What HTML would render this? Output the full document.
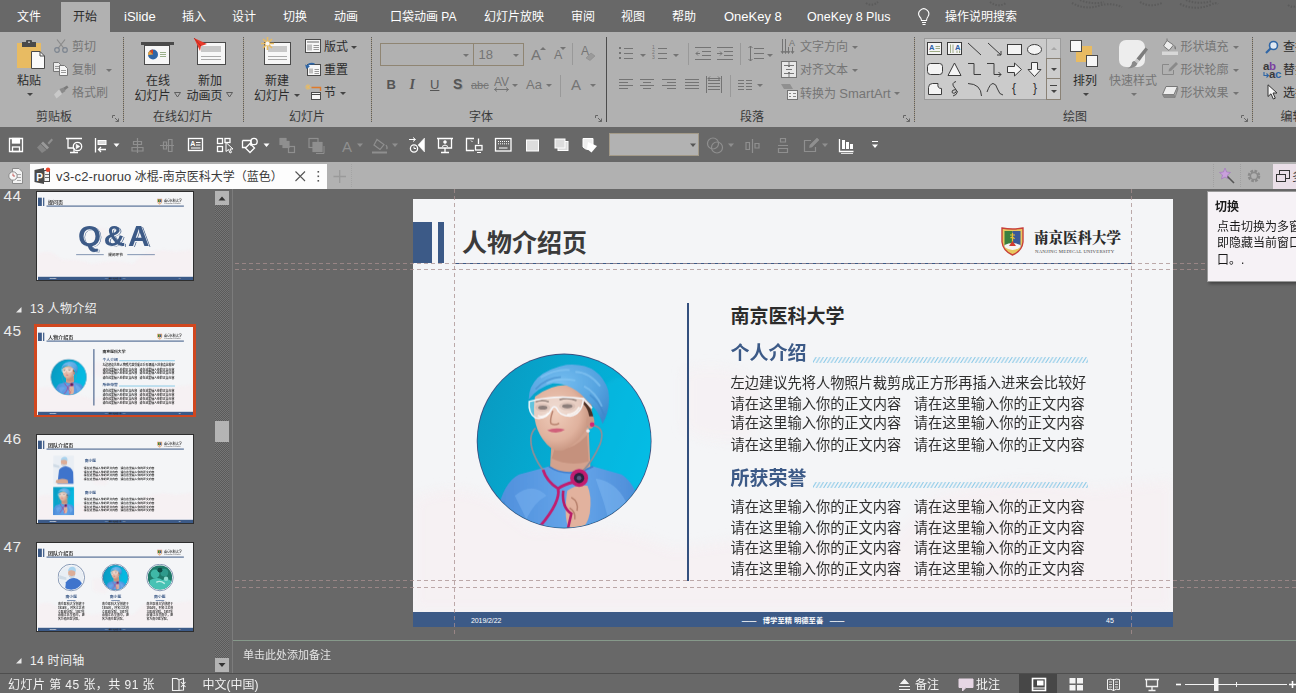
<!DOCTYPE html>
<html lang="zh-CN">
<head>
<meta charset="utf-8">
<title>PowerPoint</title>
<style>
*{box-sizing:border-box;margin:0;padding:0}
html,body{width:1296px;height:693px;overflow:hidden;background:#686868}
body{position:relative;font-family:"Liberation Sans","Noto Sans CJK SC",sans-serif;font-size:12px;color:#2b2b2b}
.a{position:absolute;white-space:nowrap;line-height:1}
.tab{position:absolute;top:10px;font-size:12px;color:#fff;white-space:nowrap;line-height:14px}
#tabbar{position:absolute;left:0;top:0;width:1296px;height:32px;background:#686868}
#acttab{position:absolute;left:61px;top:2px;width:49px;height:31px;background:#b1b1b1}
#ribbon{position:absolute;left:0;top:32px;width:1296px;height:95px;background:#b1b1b1}
#qat{position:absolute;left:0;top:127px;width:1296px;height:35px;background:#686868}
#docbar{position:absolute;left:0;top:162px;width:1296px;height:27px;background:#b1b1b1}
#doctab{position:absolute;left:30px;top:164px;width:297px;height:25px;background:#fdfdfd}
.rl{position:absolute;font-size:12px;line-height:13px;color:#2b2b2b;white-space:nowrap}
.rd{color:#757575}
.gl{position:absolute;top:109px;font-size:12px;line-height:13px;color:#3a3a3a;white-space:nowrap}
.sep{position:absolute;top:37px;width:1px;height:85px;background:#8c8c8c}
.dd{position:absolute;width:0;height:0;border-left:3px solid transparent;border-right:3px solid transparent;border-top:3px solid #444}
.ddg{border-top-color:#747474}
svg{position:absolute;overflow:visible}
.th span{font-weight:bold;color:#1c1c1c}
</style>
</head>
<body>
<!-- ===== TAB BAR ===== -->
<div id="tabbar"></div>
<div id="acttab"></div>
<svg style="left:0;top:0" width="1296" height="14" viewBox="0 0 1296 14"><g fill="none" stroke="#575757" stroke-width="2" stroke-dasharray="1.500 1.500" opacity=".8"><path d="M1072 3Q1085 10 1098 6Q1110 2 1122 7M1080 0Q1092 5 1104 2M1140 2Q1150 8 1162 3M1180 4Q1195 11 1210 5Q1216 2 1218 4M1186 0Q1198 5 1212 1M866 3Q872 7 878 2M990 2Q998 8 1006 3M1288 5Q1292 8 1296 6"/></g></svg>
<span class="tab" style="left:17px">文件</span>
<span class="tab" style="left:73px;color:#2b2b2b">开始</span>
<span class="tab" style="left:124px;font-size:13px">iSlide</span>
<span class="tab" style="left:182px">插入</span>
<span class="tab" style="left:232px">设计</span>
<span class="tab" style="left:283px">切换</span>
<span class="tab" style="left:334px">动画</span>
<span class="tab" style="left:390px">口袋动画 PA</span>
<span class="tab" style="left:484px">幻灯片放映</span>
<span class="tab" style="left:571px">审阅</span>
<span class="tab" style="left:621px">视图</span>
<span class="tab" style="left:672px">帮助</span>
<span class="tab" style="left:724px;font-size:13px">OneKey 8</span>
<span class="tab" style="left:807px;font-size:12.500px">OneKey 8 Plus</span>
<span class="tab" style="left:945px">操作说明搜索</span>
<!-- ===== RIBBON ===== -->
<div id="ribbon"></div>
<span class="rl" style="left:17px;top:74.5px;">粘贴</span>
<i class="dd" style="left:27px;top:93px"></i>
<span class="rl rd" style="left:72px;top:41px;">剪切</span>
<span class="rl rd" style="left:72px;top:64px;">复制</span>
<i class="dd ddg" style="left:105.5px;top:69px"></i>
<span class="rl rd" style="left:72px;top:87px;">格式刷</span>
<span class="gl" style="left:36px;top:111px;">剪贴板</span>
<svg style="left:112px;top:115px" width="7" height="7" viewBox="0 0 7 7"><path d="M0.5 3V0.5H3M3 3L6.5 6.5M6.5 3.5V6.5H3.5" fill="none" stroke="#666" stroke-width="1"/></svg>
<i class="a" style="left:123px;top:37px;width:1px;height:85px;background:repeating-linear-gradient(#5e5e5e 0 1px,#a79c88 1px 2px)"></i>
<span class="rl" style="left:146px;top:74.5px;">在线</span>
<span class="rl" style="left:134.5px;top:89.5px;">幻灯片</span>
<span class="rl" style="left:198px;top:74.5px;">新加</span>
<span class="rl" style="left:186.5px;top:89.5px;">动画页</span>
<span class="gl" style="left:153px;top:111px;">在线幻灯片</span>
<i class="a" style="left:243px;top:37px;width:1px;height:85px;background:repeating-linear-gradient(#5e5e5e 0 1px,#a79c88 1px 2px)"></i>
<span class="rl" style="left:265px;top:74.5px;">新建</span>
<span class="rl" style="left:254px;top:89.5px;">幻灯片</span>
<i class="dd" style="left:293.5px;top:94px"></i>
<span class="rl" style="left:324px;top:41px;">版式</span>
<i class="dd" style="left:351px;top:46px"></i>
<span class="rl" style="left:324px;top:64px;">重置</span>
<span class="rl" style="left:324px;top:87px;">节</span>
<i class="dd" style="left:339.5px;top:92px"></i>
<span class="gl" style="left:289px;top:111px;">幻灯片</span>
<i class="a" style="left:371px;top:37px;width:1px;height:85px;background:repeating-linear-gradient(#5e5e5e 0 1px,#a79c88 1px 2px)"></i>
<i class="a" style="left:380px;top:43px;width:94px;height:23px;border:1px solid #8f8573"></i>
<i class="a" style="left:473px;top:43px;width:51px;height:23px;border:1px solid #8f8573"></i>
<i class="dd ddg" style="left:463px;top:54px"></i>
<i class="dd ddg" style="left:513px;top:54px"></i>
<span class="rl rd" style="left:478.5px;top:47.5px;font-size:13px">18</span>
<span class="rl" style="left:386.5px;top:78px;font-weight:bold;font-size:13px;color:#555">B</span>
<span class="rl" style="left:409.5px;top:78px;font-style:italic;font-weight:bold;font-size:14px;color:#555;font-family:'Liberation Serif',serif">I</span>
<span class="rl" style="left:430px;top:78px;text-decoration:underline;font-size:13px;color:#555">U</span>
<span class="rl" style="left:453px;top:78px;font-weight:bold;font-size:14px;color:#555;text-shadow:1px 1px 0 #999">S</span>
<span class="rl rd" style="left:471px;top:78.5px;text-decoration:line-through;font-size:11px">abc</span>
<span class="rl rd" style="left:494px;top:75.5px;font-size:12px">AV</span>
<i class="dd ddg" style="left:512px;top:84px"></i>
<svg style="left:494px;top:87px" width="15" height="5" viewBox="0 0 15 5"><path d="M0.5 2.5H14.5M3 0.5L0.5 2.5L3 4.5M12 0.5L14.5 2.5L12 4.5" fill="none" stroke="#747474" stroke-width="1"/></svg>
<span class="rl rd" style="left:526px;top:78px;font-size:13px">Aa</span>
<i class="dd ddg" style="left:545.5px;top:84px"></i>
<i class="a" style="left:560px;top:75px;width:1px;height:22px;background:#999"></i>
<span class="rl rd" style="left:571px;top:77.5px;font-size:15px">A</span>
<i class="dd ddg" style="left:589.5px;top:84px"></i>
<span class="rl rd" style="left:531px;top:48px;font-size:15px">A</span>
<i class="dd ddg" style="left:540px;top:47px;transform:rotate(180deg)"></i>
<span class="rl rd" style="left:554px;top:49px;font-size:12.5px">A</span>
<i class="dd ddg" style="left:560px;top:47px"></i>
<i class="a" style="left:572px;top:43px;width:1px;height:22px;background:#999"></i>
<span class="rl rd" style="left:581px;top:44.5px;font-size:12px">A</span>
<svg style="left:585px;top:52px" width="11" height="9" viewBox="0 0 11 9"><path d="M1 6L6 1L10 4L5 8.5Z" fill="#9a9a9a" stroke="#8a8a8a" stroke-width=".6"/></svg>
<span class="gl" style="left:469px;top:111px;">字体</span>
<svg style="left:595px;top:115px" width="7" height="7" viewBox="0 0 7 7"><path d="M0.5 3V0.5H3M3 3L6.5 6.5M6.5 3.5V6.5H3.5" fill="none" stroke="#666" stroke-width="1"/></svg>
<i class="a" style="left:606px;top:37px;width:1px;height:85px;background:#4c4c4c"></i>
<svg style="left:0;top:0" width="1" height="1"><path d="M624 48.5H633M624 53.5H633M624 58.5H633" fill="none" stroke="#747474" stroke-width="1"/></svg>
<svg style="left:0;top:0" width="1" height="1"><g fill="#747474"><rect x="619" y="47" width="2" height="2"/><rect x="619" y="52" width="2" height="2"/><rect x="619" y="57" width="2" height="2"/></g></svg>
<i class="dd ddg" style="left:639.5px;top:54px"></i>
<svg style="left:0;top:0" width="1" height="1"><path d="M658 48.5H667M658 53.5H667M658 58.5H667" fill="none" stroke="#747474" stroke-width="1"/></svg>
<span class="a" style="left:652px;top:45px;font-size:5px;line-height:5px;color:#747474;white-space:pre">1<br>2<br>3</span>
<i class="dd ddg" style="left:673px;top:54px"></i>
<i class="a" style="left:688px;top:43px;width:1px;height:22px;background:#999"></i>
<svg style="left:0;top:0" width="1" height="1"><path d="M695 47.5H711M702 51.5H711M702 55.5H711M695 59.5H711" fill="none" stroke="#747474" stroke-width="1"/></svg>
<svg style="left:0;top:0" width="1" height="1"><path d="M700 53.5H696M698 51.5L696 53.5L698 55.5" fill="none" stroke="#747474"/></svg>
<svg style="left:0;top:0" width="1" height="1"><path d="M717 47.5H733M724 51.5H733M724 55.5H733M717 59.5H733" fill="none" stroke="#747474" stroke-width="1"/></svg>
<svg style="left:0;top:0" width="1" height="1"><path d="M717 53.5H722M720 51.5L722 53.5L720 55.5" fill="none" stroke="#747474"/></svg>
<i class="a" style="left:740px;top:43px;width:1px;height:22px;background:#999"></i>
<svg style="left:0;top:0" width="1" height="1"><path d="M754 48.5H764M754 53.5H764M754 58.5H764" fill="none" stroke="#747474" stroke-width="1"/></svg>
<svg style="left:0;top:0" width="1" height="1"><path d="M750.5 46V61M748.5 48L750.5 46L752.5 48M748.5 59L750.5 61L752.5 59" fill="none" stroke="#747474"/></svg>
<i class="dd ddg" style="left:767px;top:54px"></i>
<svg style="left:0;top:0" width="1" height="1"><path d="M619 79.5H633M619 82.5H628M619 85.5H633M619 88.5H628" fill="none" stroke="#747474" stroke-width="1"/></svg>
<svg style="left:0;top:0" width="1" height="1"><path d="M640 79.5H654M643 82.5H651M640 85.5H654M643 88.5H651" fill="none" stroke="#747474" stroke-width="1"/></svg>
<svg style="left:0;top:0" width="1" height="1"><path d="M662 79.5H676M667 82.5H676M662 85.5H676M667 88.5H676" fill="none" stroke="#747474" stroke-width="1"/></svg>
<svg style="left:0;top:0" width="1" height="1"><path d="M685 79.5H699M685 82.5H699M685 85.5H699M685 88.5H699" fill="none" stroke="#747474" stroke-width="1"/></svg>
<svg style="left:0;top:0" width="1" height="1"><path d="M708 80.5H720M708 83.5H720M708 86.5H720M708 89.5H720" fill="none" stroke="#747474" stroke-width="1"/></svg>
<svg style="left:0;top:0" width="1" height="1"><path d="M706.5 76V93M721.5 76V93M708 78.5H720M710 76.5L708 78.5L710 80.5M718 76.5L720 78.5L718 80.5" fill="none" stroke="#747474"/></svg>
<i class="a" style="left:729.5px;top:75px;width:1px;height:22px;background:#999"></i>
<svg style="left:0;top:0" width="1" height="1"><path d="M738 80.5H744M738 83.5H744M738 86.5H744M738 89.5H744" fill="none" stroke="#747474" stroke-width="1"/></svg>
<svg style="left:0;top:0" width="1" height="1"><path d="M746 80.5H752M746 83.5H752M746 86.5H752M746 89.5H752" fill="none" stroke="#747474" stroke-width="1"/></svg>
<i class="dd ddg" style="left:757px;top:84px"></i>
<svg style="left:781px;top:38px" width="16" height="17" viewBox="0 0 16 17"><path d="M1.5 1V15M4.5 1V15M7.5 9V15M0 13L1.5 15.5L3 13M3 13L4.5 15.5L6 13M6 13L7.5 15.5L9 13" fill="none" stroke="#747474"/><text x="8" y="8" font-size="9" fill="#747474" font-family="Liberation Sans,sans-serif">A</text><path d="M11.5 9V15M10 13L11.5 15.5L13 13" fill="none" stroke="#747474"/></svg>
<span class="rl rd" style="left:800px;top:41px;">文字方向</span>
<i class="dd ddg" style="left:851.5px;top:46px"></i>
<svg style="left:781px;top:61px" width="16" height="17" viewBox="0 0 16 17"><rect x=".5" y=".5" width="15" height="16" fill="#e8e8e8" stroke="#747474"/><path d="M3 4.5H13M3 12.5H13M5 8.5H11M8 1V6M6.5 4L8 6L9.5 4M8 16V11M6.5 13L8 11L9.5 13" fill="none" stroke="#777"/></svg>
<span class="rl rd" style="left:800px;top:64px;">对齐文本</span>
<i class="dd ddg" style="left:851.5px;top:69px"></i>
<svg style="left:781px;top:84px" width="17" height="16" viewBox="0 0 17 16"><path d="M0 0H9L12 5H3Z" fill="#909090"/><rect x="6.5" y="6.5" width="10" height="9" fill="#eee" stroke="#747474"/><path d="M8 9.5H10M12 9.5H15M8 12.5H10M12 12.5H15" stroke="#888"/></svg>
<span class="rl rd" style="left:800px;top:87px;">转换为 <span style="font-size:13px">SmartArt</span></span>
<i class="dd ddg" style="left:894px;top:92px"></i>
<span class="gl" style="left:740px;top:111px;">段落</span>
<svg style="left:903px;top:115px" width="7" height="7" viewBox="0 0 7 7"><path d="M0.5 3V0.5H3M3 3L6.5 6.5M6.5 3.5V6.5H3.5" fill="none" stroke="#666" stroke-width="1"/></svg>
<i class="a" style="left:914px;top:37px;width:1px;height:85px;background:repeating-linear-gradient(#5e5e5e 0 1px,#a79c88 1px 2px)"></i>
<i class="a" style="left:924px;top:38px;width:137px;height:62px;background:#cbcbcb;border:1px solid #9a9a9a"></i>
<i class="a" style="left:1046px;top:38px;width:15px;height:62px;border:1px solid #9c9c9c"></i>
<i class="a" style="left:1046px;top:58px;width:15px;height:21px;border:1px solid #8a8276;background:#cdcdcd"></i>
<i class="a" style="left:1046px;top:78px;width:15px;height:22px;border:1px solid #8a8276;background:#cdcdcd"></i>
<i class="dd" style="left:1050.5px;top:47px;border-top-color:#a8a8a8;transform:rotate(180deg)"></i>
<i class="dd" style="left:1050.5px;top:68px"></i>
<i class="dd" style="left:1050.5px;top:90px"></i>
<i class="a" style="left:1050px;top:85px;width:7px;height:1px;background:#444"></i>
<svg style="left:0;top:0" width="1" height="1"><rect x="927.5" y="42.5" width="14" height="12" fill="#f4f4f4" stroke="#3c3c3c"/><path d="M935.5 46.5H940M935.5 48.5H940M929.5 51.5H940" stroke="#8a9a6a" stroke-width=".8"/><text x="929" y="50" font-size="7.5" font-weight="bold" fill="#2f5fa8" font-family="Liberation Sans,sans-serif">A</text><rect x="947.5" y="42.5" width="14" height="12" fill="#f4f4f4" stroke="#3c3c3c"/><path d="M950.5 44.5V53M953 44.5V53M957 50.5V53M959.5 50.5V53" stroke="#8a9a6a" stroke-width=".8"/><text x="955" y="50" font-size="7.5" font-weight="bold" fill="#2f5fa8" font-family="Liberation Sans,sans-serif">A</text><path d="M968 43L981 55" stroke="#3c3c3c" fill="none"/><path d="M988 43L1001 55M1001 55V51M1001 55H997" stroke="#3c3c3c" fill="none"/><rect x="1007.5" y="44.5" width="14" height="10" fill="#f4f4f4" stroke="#3c3c3c"/><ellipse cx="1034.5" cy="49.5" rx="7" ry="5" fill="#f4f4f4" stroke="#3c3c3c"/><rect x="927.5" y="63.5" width="15" height="11" rx="3" fill="#f4f4f4" stroke="#3c3c3c"/><path d="M954.5 63L961 75.5H948Z" fill="#f4f4f4" stroke="#3c3c3c"/><path d="M968 63.5H974V74.5H981" fill="none" stroke="#3c3c3c"/><path d="M987 63.5H994V74.5H1001M1001 74.5L998.5 72M1001 74.5L998.5 77" fill="none" stroke="#3c3c3c"/><path d="M1007.500 66.500H1014.500V63L1021.500 69.500L1014.500 76V72.500H1007.500Z" fill="#f4f4f4" stroke="#3c3c3c"/><path d="M1031.500 62.500H1037.500V69.500H1041L1034.500 76.500L1028 69.500H1031.500Z" fill="#f4f4f4" stroke="#3c3c3c"/><path d="M928.500 94.500V87.500Q928.500 83.500 932.500 83.500H938Q937 88.500 941.500 88.500V94.500Z" fill="#f4f4f4" stroke="#3c3c3c"/><path d="M956 81.500Q951 83 954 87Q958 91 955 93Q951 94 952.500 90.500Q956 88 957.500 91.500Q957 95 953 96" fill="none" stroke="#3c3c3c"/><path d="M968 83.500Q981 84 981.500 96" fill="none" stroke="#3c3c3c"/><path d="M987 92Q990 83.500 993 83.500Q996 83.500 997.500 89Q999.500 95 1003 95" fill="none" stroke="#3c3c3c"/></svg>
<span class="rl" style="left:1012px;top:82px;font-size:12px">{</span>
<span class="rl" style="left:1033px;top:82px;font-size:12px">}</span>
<span class="rl" style="left:1073px;top:74.5px;">排列</span>
<i class="dd" style="left:1082.5px;top:93px"></i>
<span class="rl rd" style="left:1109px;top:74.5px;">快速样式</span>
<i class="dd ddg" style="left:1131px;top:93px"></i>
<span class="rl rd" style="left:1180.5px;top:41px;">形状填充</span>
<i class="dd ddg" style="left:1232.5px;top:46px"></i>
<span class="rl rd" style="left:1180.5px;top:64px;">形状轮廓</span>
<i class="dd ddg" style="left:1232.5px;top:69px"></i>
<span class="rl rd" style="left:1180.5px;top:87px;">形状效果</span>
<i class="dd ddg" style="left:1232.5px;top:92px"></i>
<span class="gl" style="left:1063px;top:111px;">绘图</span>
<svg style="left:1240.5px;top:115px" width="7" height="7" viewBox="0 0 7 7"><path d="M0.5 3V0.5H3M3 3L6.5 6.5M6.5 3.5V6.5H3.5" fill="none" stroke="#666" stroke-width="1"/></svg>
<i class="a" style="left:1251.5px;top:37px;width:1px;height:85px;background:repeating-linear-gradient(#5e5e5e 0 1px,#a79c88 1px 2px)"></i>
<span class="rl" style="left:1283px;top:41px;">查找</span>
<span class="rl" style="left:1283px;top:64px;">替换</span>
<span class="rl" style="left:1283px;top:87px;">选择</span>
<span class="gl" style="left:1280.5px;top:111px;">编辑</span>
<!-- paste -->
<svg style="left:17px;top:40px" width="29" height="30" viewBox="0 0 29 30">
<rect x="0" y="3" width="24" height="25" fill="#e8bb62"/>
<rect x="5" y="2" width="14" height="5" fill="#4a4a4a"/><rect x="9" y="0" width="6" height="4" rx="1" fill="#4a4a4a"/><rect x="11" y="1.500" width="2" height="1.500" fill="#b2b2b2"/>
<path d="M14.500 11.500H23L27.500 16V28.500H14.500Z" fill="#fafafa" stroke="#4a4a4a"/><path d="M23 11.500V16H27.500" fill="none" stroke="#4a4a4a"/>
</svg>
<!-- scissors -->
<svg style="left:54px;top:39px" width="14" height="14" viewBox="0 0 14 14"><path d="M3 0.500L10 9.500M11 0.500L4 9.500" stroke="#8a8a8a" fill="none" stroke-width="1.200"/><circle cx="3" cy="11" r="2.300" fill="none" stroke="#7d8590" stroke-width="1.200"/><circle cx="11" cy="11" r="2.300" fill="none" stroke="#7d8590" stroke-width="1.200"/></svg>
<!-- copy -->
<svg style="left:53px;top:62px" width="15" height="14" viewBox="0 0 15 14"><path d="M0.500 0.500H5.500L7.500 2.500V9.500H0.500Z" fill="#ececec" stroke="#777"/><path d="M2 4.500H6M2 6.500H6" stroke="#999"/><path d="M6.500 3.500H11.500L14.500 6.500V13.500H6.500Z" fill="#f6f6f6" stroke="#777"/><path d="M8 8.500H13M8 10.500H13" stroke="#999"/></svg>
<!-- format painter -->
<svg style="left:54px;top:85px" width="15" height="14" viewBox="0 0 15 14"><path d="M9 3L13 0.500L14.500 2.500L10.500 5.500Z" fill="#7a7a7a"/><path d="M5.500 4L9.500 2.500L11.500 6L8 8.500Z" fill="#8a8a8a"/><path d="M5 4.500L8 9L2.500 13.500L0 9.500Z" fill="#c9c9c9"/></svg>
<!-- online slides icon -->
<svg style="left:141px;top:41px" width="34" height="24" viewBox="0 0 34 24"><rect x="0" y="1" width="33" height="3" fill="#4a4a4a"/><rect x="3.500" y="4.500" width="25" height="19" fill="#f7f7f7" stroke="#4a4a4a"/><circle cx="12" cy="13.500" r="5" fill="#2f66a6"/><path d="M12 13.500L8.500 10A5 5 0 0 1 12 8.500Z" fill="#d24726"/><path d="M12 13.500L7 14A5 5 0 0 1 8.500 10Z" fill="#e8a33d"/><path d="M19 11.500H25M19 13.500H25M19 15.500H25" stroke="#9ab08a"/></svg>
<!-- new animation page -->
<svg style="left:194px;top:38px" width="32" height="27" viewBox="0 0 32 27"><rect x="3.500" y="4.500" width="28" height="22" fill="#f7f7f7" stroke="#4a4a4a"/><rect x="7" y="8" width="20" height="6" fill="#c8c8c8"/><path d="M7 18.500H27M7 21.500H27" stroke="#aaa"/><path d="M0 0L13 6L7 8L6 13Z" fill="#e8392b"/><path d="M0 0L7 8" stroke="#b02015" stroke-width=".8"/></svg>
<!-- new slide -->
<svg style="left:261px;top:37px" width="30" height="28" viewBox="0 0 30 28"><rect x="3.500" y="5.500" width="26" height="22" fill="#f7f7f7" stroke="#4a4a4a"/><rect x="7" y="9" width="19" height="6" fill="#c8c8c8"/><path d="M7 19.500H26M7 22.500H26" stroke="#aaa"/><g stroke="#e8bb62" stroke-width="1.600"><path d="M6.500 0V13M0 6.500H13M2 2L11 11M11 2L2 11"/></g><circle cx="6.500" cy="6.500" r="2" fill="#f7f7f7"/></svg>
<!-- layout -->
<svg style="left:305px;top:39px" width="17" height="14" viewBox="0 0 17 14"><rect x=".5" y=".5" width="15" height="13" fill="#f7f7f7" stroke="#4a4a4a"/><rect x="2" y="2" width="12" height="2" fill="#b0b0b0"/><rect x="2" y="5.500" width="5" height="6" fill="#c0c0c0"/><path d="M8.500 6.500H14M8.500 8.500H14M8.500 10.500H14" stroke="#999"/></svg>
<!-- reset -->
<svg style="left:305px;top:62px" width="17" height="14" viewBox="0 0 17 14"><rect x="2.500" y="2.500" width="13" height="11" fill="#f7f7f7" stroke="#4a4a4a"/><rect x="4" y="6.500" width="4" height="5" fill="#c0c0c0"/><path d="M9.500 7.500H14M9.500 9.500H14M9.500 11.500H14" stroke="#999"/><path d="M1.500 5.500Q3.500 0.500 9.500 2" fill="none" stroke="#2f66a6" stroke-width="1.600"/><path d="M0 2.500L1.500 7L5 4.500Z" fill="#2f66a6"/></svg>
<!-- section -->
<svg style="left:305px;top:84px" width="17" height="16" viewBox="0 0 17 16"><g stroke="#e8bb62" stroke-width="1"><path d="M3 0V6M0 3H6M1 1L5 5M5 1L1 5"/></g><path d="M6.500 3.500H15.500V7" fill="none" stroke="#e07a2a" stroke-width="1.400"/><rect x="6.500" y="8.500" width="9" height="7" fill="#f7f7f7" stroke="#4a4a4a"/><path d="M6.500 10.500H15.500" stroke="#4a4a4a"/></svg>
<!-- hollow dropdown arrows for online group -->
<svg style="left:174px;top:92px" width="7" height="6" viewBox="0 0 7 6"><path d="M0.500 0.500H6.500L3.500 5Z" fill="none" stroke="#555" stroke-width=".9"/></svg>
<svg style="left:226px;top:92px" width="7" height="6" viewBox="0 0 7 6"><path d="M0.500 0.500H6.500L3.500 5Z" fill="none" stroke="#555" stroke-width=".9"/></svg>
<!-- arrange -->
<svg style="left:1070px;top:40px" width="29" height="27" viewBox="0 0 29 27"><rect x="6" y="6" width="16" height="16" fill="#e8bb62"/><rect x=".5" y=".5" width="11" height="11" fill="#f7f7f7" stroke="#4a4a4a"/><rect x="16.500" y="15.500" width="11" height="11" fill="#f7f7f7" stroke="#4a4a4a"/></svg>
<!-- quick style -->
<svg style="left:1119px;top:40px" width="30" height="30" viewBox="0 0 30 30"><rect x="0" y="0" width="26" height="27" rx="7" fill="#ededed"/><path d="M29 9.500L20.500 21L17.500 18.500L26.500 7.500Z" fill="#7c7c7c"/><path d="M20.500 21L18.500 23.500L15.500 21L17.500 18.500Z" fill="#c9c9c9"/><path d="M18.500 23.500Q17 28 8.500 28.500Q13 26 13 22.500Q14 20.500 15.500 21Z" fill="#8a8a8a"/></svg>
<!-- shape fill -->
<svg style="left:1162px;top:38px" width="17" height="17" viewBox="0 0 17 17"><path d="M5 2.500L11.500 7L7 12.500L1.500 8Z" fill="#ededed" stroke="#777"/><path d="M5 2.500V0.500" stroke="#777"/><path d="M12.500 7Q15 10.500 13.500 11.500Q12 11 12.500 7Z" fill="#777"/><rect x="0" y="13.500" width="16" height="3.500" fill="#d8d8d8"/></svg>
<!-- shape outline -->
<svg style="left:1162px;top:61px" width="17" height="17" viewBox="0 0 17 17"><path d="M7 3.500H0.500V13.500H11.500V9" fill="none" stroke="#888"/><path d="M14 1L16 3L9 10L6.500 10.500L7 8Z" fill="#8a8a8a"/></svg>
<!-- shape effect -->
<svg style="left:1162px;top:85px" width="17" height="15" viewBox="0 0 17 15"><path d="M4 1.500H15.500L12 9.500H0.500Z" fill="#ededed" stroke="#777"/><path d="M0.500 9.500L2 12.500H13L12 9.500M15.500 1.500L16 4L13 12.500" fill="#8a8a8a" stroke="#777" stroke-width=".6"/></svg>
<!-- find -->
<svg style="left:1265px;top:40px" width="14" height="14" viewBox="0 0 14 14"><circle cx="8.500" cy="5.500" r="4" fill="#dfe8f3" stroke="#2f66a6" stroke-width="1.600"/><path d="M5.500 8.500L1 13" stroke="#2f66a6" stroke-width="2.200"/></svg>
<!-- replace -->
<span class="a" style="left:1263px;top:61px;font-size:11.500px;font-weight:bold;color:#3a3a3a;letter-spacing:-.3px">a<span style="color:#7a3fa0">b</span></span><span class="a" style="left:1269px;top:69px;font-size:11.500px;font-weight:bold;color:#3a3a3a;letter-spacing:-.3px">a<span style="color:#2f66a6">c</span></span>
<svg style="left:1263px;top:72px" width="7" height="6" viewBox="0 0 7 6"><path d="M1 0V3.500H5.500M3.500 1.500L5.500 3.500L3.500 5.500" fill="none" stroke="#2f66a6" stroke-width="1.100"/></svg>
<!-- select -->
<svg style="left:1267px;top:84px" width="11" height="16" viewBox="0 0 11 16"><path d="M1 0.800V12.500L4 9.800L6.300 15L8.300 14.200L6 9H10Z" fill="#f7f7f7" stroke="#333" stroke-width="1"/></svg>
<!-- bulb -->
<svg style="left:917px;top:8px" width="14" height="18" viewBox="0 0 14 18"><path d="M4.500 12.500Q4.500 10.500 2.500 8.500A5 5 0 1 1 11 8.500Q9.500 10.500 9.500 12.500Z" fill="none" stroke="#fff" stroke-width="1.100"/><path d="M5 14.500H9M5.500 16.500H8.500" stroke="#fff" stroke-width="1.100"/></svg>


<!-- ===== QAT ===== -->
<div id="qat"></div>
<svg style="left:0;top:127px" width="1296" height="35" viewBox="0 127 1296 35">
<g fill="none" stroke="#fff" stroke-width="1.300">
<!-- save -->
<path d="M9.500 138.500H22.500V151.500H9.500Z"/><rect x="12.500" y="138.500" width="7" height="4.500" fill="#fff"/><rect x="12.500" y="147" width="7" height="4.500"/>
<!-- slideshow from start -->
<path d="M66 138.500H82M68 139V148H74M74 148V152.500M70 152.500H78"/><circle cx="77.500" cy="146.500" r="4.200"/><path d="M76.200 144.300L79.800 146.500L76.200 148.700Z" fill="#fff" stroke-width=".6"/>
<!-- align left -->
<path d="M95.500 138V152.500"/><rect x="98" y="140.500" width="8" height="4" fill="#ddd" stroke-width="1"/><path d="M106 149.500H98.500M101 147L98.500 149.500L101 152"/>
<!-- textbox -->
<rect x="188.500" y="138.500" width="14" height="12"/><path d="M191 148H200.500M196 142.500H200.500M196 145H200.500" stroke-width="1"/><text x="190.300" y="146" font-size="7" font-weight="bold" fill="#fff" stroke="none" font-family="Liberation Sans,sans-serif">A</text>
<!-- select shapes -->
<rect x="217.500" y="138.500" width="5" height="5"/><rect x="217.500" y="146.500" width="5" height="5"/><rect x="225" y="138.500" width="5" height="4"/><path d="M226 142.500V151.500L228.500 149.500L230 153L231.500 152.300L230 149H233Z" fill="#686868" stroke-width="1"/>
<!-- shapes -->
<path d="M242.500 140.500H251V146"/><path d="M242.500 140.500V147.500H246"/><path d="M250 143.500L254.500 148L250 152.500L245.500 148Z"/><circle cx="254" cy="141.500" r="3.200"/>
<!-- clock arrow -->
<circle cx="414" cy="148.500" r="3.600"/><path d="M414 146.500V148.500H416M409 139.500H415M413 137.500L415.500 139.500L413 141.500" stroke-width="1"/><path d="M424.500 138V152L418 145Z" fill="#fff" stroke-width=".5"/>
<!-- presenter -->
<path d="M437 138.500H453M438.500 139V148H451.500V139M445 148V152.500M441 152.500H449"/><circle cx="445" cy="142" r="1.500" fill="#fff" stroke-width=".5"/><path d="M442 146.500Q445 143.500 448 146.500" stroke-width="1"/>
<!-- screen + small monitor -->
<path d="M474 138.500H466.500V150.500H474M478.500 138.500V144"/><path d="M471 140.500L472.500 142" stroke-width="1"/><rect x="475.500" y="145.500" width="6.500" height="4.500"/><path d="M477 152.500H481" stroke-width="1"/>
<!-- keyboard -->
<rect x="495.500" y="138.500" width="15.500" height="12.500"/><path d="M498 141.500H509M498 143.800H509" stroke-width="1" stroke-dasharray="1 1"/><path d="M499 148H507.500" stroke-width="1"/>
<!-- chart -->
<path d="M839.500 139V151.500H853.500"/><rect x="842" y="140" width="3" height="9" fill="#fff" stroke="none"/><rect x="846" y="142" width="3" height="7" fill="#fff" stroke="none"/><rect x="850" y="144" width="3" height="5" fill="#fff" stroke="none"/><path d="M841 153.500H853" stroke-width=".8"/>
<!-- final overflow -->
<path d="M872 141.500H878" stroke-width="1"/><path d="M872 144.500H878L875 148Z" fill="#fff" stroke="none"/>
</g>
<!-- filled squares -->
<rect x="526.500" y="140" width="12" height="11" fill="#ddd" stroke="#fff" stroke-width="1"/>
<rect x="558" y="141.500" width="10" height="9" fill="#ddd" stroke="#fff"/><rect x="555" y="139" width="10" height="9" fill="#ddd" stroke="#fff"/>
<path d="M583 138.500H593V147Q588 152 583 147Z" fill="#eee" stroke="#fff"/><path d="M588 142L597 146L591.500 152.500L587 149Z" fill="#fff"/>
<!-- gray icons -->
<g fill="none" stroke="#8f8f8f" stroke-width="1.200">
<g stroke="none"><path d="M47.500 143L51.500 138.500L53 140L49 144.500Z" fill="#8f8f8f"/><path d="M43 141.500L49 147.500L47 149.500L41 143.500Z" fill="#999"/><path d="M40.500 144L46.500 150L42 153L37 147.500Z" fill="#858585"/></g>
<path d="M137.500 138V153M133.500 141.500H141.500V144.500H133.500ZM132 147.500H143V151H132Z"/>
<path d="M160 145.500H174M163.500 142H166.500V149H163.500ZM168.500 139.500H172V151.500H168.500Z"/>
<rect x="280" y="138.500" width="6" height="6" fill="#8f8f8f"/><rect x="288.500" y="146.500" width="6" height="6"/><rect x="283" y="141.500" width="6" height="6" fill="#8f8f8f"/>
<rect x="309" y="138.500" width="9" height="9"/><rect x="313" y="142.500" width="9" height="9" fill="#8f8f8f"/><path d="M324 146V153.500H316" stroke-width="1"/>
<path d="M372 152.500H387" stroke-width="2"/><path d="M377 139.500L384 144.500L380 149.500L374 145Z"/><path d="M386 145Q388 148 386.500 149" />
<circle cx="713" cy="143.500" r="5.500"/><circle cx="717" cy="147.500" r="5.500"/>
<path d="M752.500 139V153M746 142.500H749.500V149.500H746ZM755 143.500H759V148H755Z"/>
<path d="M778 145.500H788M780.500 138.500H785.500V142H780.500ZM778.500 148.500H787.500V152.500H778.500Z"/>
<path d="M811 140.500H804.500V151.500H815.500V147"/><path d="M817 138L819 140L812 147L809.500 147.500L810 145Z" fill="#8f8f8f" stroke-width=".6"/>
</g>
<text x="342" y="151.500" font-size="15" fill="#8f8f8f" font-family="Liberation Sans,sans-serif">A</text>
<!-- combo -->
<rect x="609.500" y="133.500" width="89" height="22" fill="#b2b2b2" stroke="#a39a88"/>
<g fill="#fff"><path d="M113.500 143.500H119.500L116.500 147Z"/><path d="M263.500 143.500H269.500L266.500 147Z"/></g>
<g fill="#8f8f8f"><path d="M357 143.500H363L360 147Z"/><path d="M392 143.500H398L395 147Z"/><path d="M728 143.500H734L731 147Z"/><path d="M822 143.500H828L825 147Z"/></g>
<path d="M690 143.500H696L693 147Z" fill="#555"/>
</svg>

<!-- ===== DOC TAB BAR ===== -->
<div id="docbar"></div>
<div id="doctab"></div>
<svg style="left:0;top:162px" width="1296" height="27" viewBox="0 162 1296 27">
<!-- history doc icon -->
<path d="M12.500 168.500H19L22.500 172V183.500H12.500Z" fill="#f2f2f2" stroke="#8a8a8a"/><path d="M17 174.500H21M17 177.500H21M17 180.500H21" stroke="#aaa"/><circle cx="13" cy="176" r="4.200" fill="#f6f6f6" stroke="#8a8a8a"/><path d="M13 173.500V176H15" fill="none" stroke="#c0504d" stroke-width=".9"/>
<!-- ppt icon -->
<path d="M34.500 170L44 168V184L34.500 182Z" fill="#4a4a4a"/><rect x="44" y="170.500" width="5.500" height="11" fill="#f4f4f4" stroke="#4a4a4a"/><path d="M45 174.500H49M45 177.500H49" stroke="#4a4a4a" stroke-width=".8"/>
<text x="36.200" y="180.500" font-size="10" font-weight="bold" fill="#fff" font-family="Liberation Sans,sans-serif">P</text>
<circle cx="48" cy="169.800" r="2.200" fill="#e8452c"/>
<!-- close x -->
<path d="M295.500 171.500L305 181M305 171.500L295.500 181" stroke="#555" stroke-width="1.100" fill="none"/>
<g fill="#555"><rect x="317.500" y="171" width="1.600" height="1.600"/><rect x="317.500" y="175.500" width="1.600" height="1.600"/><rect x="317.500" y="180" width="1.600" height="1.600"/></g>
<!-- plus -->
<path d="M333.500 176.500H346M339.700 170V183" stroke="#9a9a9a" stroke-width="1.300" fill="none"/>
<path d="M351.500 164V188" stroke="#a4a4a4" stroke-dasharray="1 1"/>
<!-- right buttons -->
<path d="M1213.500 164V188M1240.500 164V188" stroke="#a0a0a0" stroke-dasharray="1 1"/>
<path d="M1225 168L1226.500 172L1230.500 172.500L1227.500 175L1228.500 179L1225 177L1221.500 179L1222.500 175L1219.500 172.500L1223.500 172Z" fill="#c9a0dc" stroke="#a070c0" stroke-width=".6"/><path d="M1227.500 176.500L1234 183" stroke="#555" stroke-width="1.600"/>
<circle cx="1254" cy="176" r="5" fill="none" stroke="#8a8a8a" stroke-width="2.600" stroke-dasharray="2.600 1.300"/><circle cx="1254" cy="176" r="3.600" fill="none" stroke="#8a8a8a" stroke-width="1.500"/>
<rect x="1273" y="164" width="23" height="25" fill="#eadfe8"/>
<rect x="1279.500" y="170.500" width="10" height="8" fill="#eadfe8" stroke="#333"/><rect x="1276.500" y="174.500" width="9" height="7" fill="#eadfe8" stroke="#333"/>
<text x="1292" y="181" font-size="12" fill="#333" font-family="Liberation Sans,Noto Sans CJK SC,sans-serif">多</text>
</svg>
<span class="a" style="left:56px;top:169px;font-size:13px;line-height:15px;color:#3a3a3a;letter-spacing:.15px">v3-c2-ruoruo<span style="letter-spacing:0;font-size:12px"> 冰棍-南京医科大学（蓝色）</span></span>

<!-- ===== LEFT PANEL ===== -->
<i class="a" style="left:232px;top:189px;width:1px;height:484px;background:#7c7c7c"></i>
<i class="a" style="left:36px;top:190.5px;width:158px;height:90px;background:#2e2e2e"></i>
<div class="a" style="left:37px;top:191.5px;width:156px;height:88px;overflow:hidden;background:#f4f5f7"><div class="a th" style="left:1px;top:1px;width:760px;height:428px;transform:scale(0.20289);transform-origin:0 0">
<svg style="left:0;top:0" width="760" height="428" viewBox="0 0 760 428"><defs><filter id="wmbt44" x="-10%" y="-10%" width="120%" height="120%"><feGaussianBlur stdDeviation="6"/></filter></defs><g filter="url(#wmbt44)" fill="#f7eef1" opacity=".65"><path d="M0 300Q40 280 80 300L120 330Q200 320 260 350L330 340Q400 330 470 350L520 300Q600 270 680 290L760 280V413H0Z"/><path d="M270 170Q330 160 350 190L340 240Q300 250 270 230Z" opacity=".7"/></g></svg>
<i class="a" style="left:0;top:23px;width:19px;height:41px;background:#3c5a87"></i>
<i class="a" style="left:25px;top:23px;width:6px;height:41px;background:#3c5a87"></i>
<span class="a" style="left:49px;top:29px;font-size:25px;line-height:30px;font-weight:bold;color:#3b3b3b">提问页</span>
<i class="a" style="left:42px;top:62px;width:677px;height:5px;background:#3c5a87"></i>
<svg style="left:588px;top:28px" width="23" height="29" viewBox="0 0 23 29"><path d="M1 1Q11.500 3 22 1V15Q21 24 11.500 28Q2 24 1 15Z" fill="#e8c860" stroke="#c8403a" stroke-width="1.400"/><path d="M3.500 4H11.500V20H3.500Z" fill="#3a8040"/><path d="M11.500 4H19.500V20H11.500Z" fill="#3a5a98"/><path d="M3.500 18Q11.500 14 19.500 18V20Q11.500 26 3.500 20Z" fill="#f4f4f4"/><path d="M11.500 6V19M9 8H14M9.500 11Q12 9 13.500 12" stroke="#e8c030" stroke-width="1.200" fill="none"/><path d="M8 19L11.500 14L15 19Z" fill="#d03a30"/></svg>
<span class="a" style="left:621px;top:27px;font-size:14.500px;line-height:22px;font-weight:900;color:#2a2a2a;font-family:'Noto Serif CJK SC','Liberation Serif',serif;letter-spacing:0">南京医科大学</span>
<span class="a" style="left:622px;top:50px;font-size:4.800px;line-height:6px;color:#444;font-family:'Liberation Serif',serif;letter-spacing:.22px">NANJING MEDICAL UNIVERSITY</span>
<i class="a" style="left:0;top:413px;width:760px;height:15px;background:#3c5a87"></i>
<span class="a" style="left:58px;top:416.500px;font-size:7px;line-height:9px;color:#fff;letter-spacing:-.1px">2019/2/22</span>
<span class="a" style="left:320px;top:416.500px;width:120px;text-align:center;font-size:7.300px;line-height:9px;color:#fff;font-weight:bold">——<span style="margin:0 6.500px">博学至精 明德至善</span>——</span>
<span class="a" style="left:693px;top:416.500px;font-size:7px;line-height:9px;color:#fff">44</span>
<span class="a" style="left:180px;top:130px;width:400px;text-align:center;font-size:146px;line-height:160px;font-weight:bold;color:#3c5a87;letter-spacing:14px;text-shadow:5px 5px 0 #f4f5f7,8px 8px 0 #3c5a87">Q&amp;A</span>
<i class="a" style="left:188px;top:303px;width:136px;height:3px;background:#3c5a87"></i>
<i class="a" style="left:440px;top:303px;width:136px;height:3px;background:#3c5a87"></i>
<span class="a" style="left:332px;top:293px;width:100px;text-align:center;font-size:18px;line-height:22px;color:#444">提问环节</span>
</div></div>
<span class="a" style="left:3.500px;top:187.7px;font-size:15.500px;line-height:16px;color:#ececec;letter-spacing:.5px">44</span>
<i class="a" style="left:34px;top:323.7px;width:162px;height:93.500px;background:#d0471f"></i>
<div class="a" style="left:37px;top:326.7px;width:156px;height:88px;overflow:hidden;background:#f4f5f7"><div class="a th" style="left:1px;top:1px;width:760px;height:428px;transform:scale(0.20289);transform-origin:0 0">
<svg style="left:0;top:0" width="760" height="428" viewBox="0 0 760 428"><defs><filter id="wmbt45" x="-10%" y="-10%" width="120%" height="120%"><feGaussianBlur stdDeviation="6"/></filter></defs><g filter="url(#wmbt45)" fill="#f7eef1" opacity=".65"><path d="M0 300Q40 280 80 300L120 330Q200 320 260 350L330 340Q400 330 470 350L520 300Q600 270 680 290L760 280V413H0Z"/><path d="M270 170Q330 160 350 190L340 240Q300 250 270 230Z" opacity=".7"/></g></svg>
<i class="a" style="left:0;top:23px;width:19px;height:41px;background:#3c5a87"></i>
<i class="a" style="left:25px;top:23px;width:6px;height:41px;background:#3c5a87"></i>
<span class="a" style="left:49px;top:29px;font-size:25px;line-height:30px;font-weight:bold;color:#3b3b3b">人物介绍页</span>
<i class="a" style="left:42px;top:62px;width:677px;height:5px;background:#3c5a87"></i>
<svg style="left:588px;top:28px" width="23" height="29" viewBox="0 0 23 29"><path d="M1 1Q11.500 3 22 1V15Q21 24 11.500 28Q2 24 1 15Z" fill="#e8c860" stroke="#c8403a" stroke-width="1.400"/><path d="M3.500 4H11.500V20H3.500Z" fill="#3a8040"/><path d="M11.500 4H19.500V20H11.500Z" fill="#3a5a98"/><path d="M3.500 18Q11.500 14 19.500 18V20Q11.500 26 3.500 20Z" fill="#f4f4f4"/><path d="M11.500 6V19M9 8H14M9.500 11Q12 9 13.500 12" stroke="#e8c030" stroke-width="1.200" fill="none"/><path d="M8 19L11.500 14L15 19Z" fill="#d03a30"/></svg>
<span class="a" style="left:621px;top:27px;font-size:14.500px;line-height:22px;font-weight:900;color:#2a2a2a;font-family:'Noto Serif CJK SC','Liberation Serif',serif;letter-spacing:0">南京医科大学</span>
<span class="a" style="left:622px;top:50px;font-size:4.800px;line-height:6px;color:#444;font-family:'Liberation Serif',serif;letter-spacing:.22px">NANJING MEDICAL UNIVERSITY</span>
<i class="a" style="left:0;top:413px;width:760px;height:15px;background:#3c5a87"></i>
<span class="a" style="left:58px;top:416.500px;font-size:7px;line-height:9px;color:#fff;letter-spacing:-.1px">2019/2/22</span>
<span class="a" style="left:320px;top:416.500px;width:120px;text-align:center;font-size:7.300px;line-height:9px;color:#fff;font-weight:bold">——<span style="margin:0 6.500px">博学至精 明德至善</span>——</span>
<span class="a" style="left:693px;top:416.500px;font-size:7px;line-height:9px;color:#fff">45</span>
<i class="a" style="left:272.5px;top:104px;width:5px;height:278px;background:#34507e"></i>
<svg style="left:47px;top:141px" width="210" height="200" viewBox="0 0 728 693">
<defs><clipPath id="cpt45"><circle cx="361" cy="350" r="300"/></clipPath>
<linearGradient id="bgt45" x1="0" y1="0" x2="1" y2=".35"><stop offset="0" stop-color="#0b93ba"/><stop offset=".45" stop-color="#06a6cd"/><stop offset="1" stop-color="#00b9e2"/></linearGradient>
<linearGradient id="sct45" x1="0" y1="0" x2="1" y2="0"><stop offset="0" stop-color="#4f8fdc"/><stop offset=".55" stop-color="#66a6ea"/><stop offset="1" stop-color="#4c8cd8"/></linearGradient>
<radialGradient id="fct45" cx=".38" cy=".42" r=".7"><stop offset="0" stop-color="#f0cdbb"/><stop offset=".6" stop-color="#e0b29e"/><stop offset="1" stop-color="#bb8671"/></radialGradient>
<radialGradient id="cpgt45" cx=".4" cy=".3" r=".8"><stop offset="0" stop-color="#74bdf0"/><stop offset=".6" stop-color="#55a3e0"/><stop offset="1" stop-color="#3f88cc"/></radialGradient>
<filter id="blt45" x="-5%" y="-5%" width="110%" height="110%"><feGaussianBlur stdDeviation="2.200"/></filter>
<filter id="bht45" x="-20%" y="-20%" width="140%" height="140%"><feGaussianBlur stdDeviation="9"/></filter></defs>
<circle cx="361" cy="350" r="303" fill="#3a4f80"/>
<g clip-path="url(#cpt45)">
<rect x="0" y="0" width="728" height="693" fill="url(#bgt45)"/>
<ellipse cx="560" cy="330" rx="120" ry="200" fill="#10c4ea" opacity=".35" filter="url(#bht45)"/>
<g filter="url(#blt45)">
<!-- neck -->
<path d="M318 340L312 446Q372 486 452 440L446 300Z" fill="#d3a28e"/>
<path d="M330 372Q380 392 440 330L446 420Q380 440 318 410Z" fill="#b98470" opacity=".55"/>
<!-- scrubs -->
<path d="M125 610Q150 492 205 466L308 438Q372 482 462 438L560 466Q612 498 625 590L625 700L125 700Z" fill="url(#sct45)"/>
<path d="M308 438Q372 482 462 438" fill="none" stroke="#3f7fd0" stroke-width="6"/>
<path d="M190 540Q250 490 300 540Q260 560 230 620Z" fill="#7fb6f2" opacity=".45"/>
<path d="M470 480Q540 490 575 560Q560 620 520 640Q500 560 470 480Z" fill="#86bcf5" opacity=".45"/>
<path d="M150 560Q170 620 160 690" stroke="#3a78c8" stroke-width="8" fill="none" opacity=".5"/>
<!-- face -->
<path d="M260 196Q246 285 286 342Q322 394 360 382Q420 352 446 290Q470 228 442 176Q350 128 260 196Z" fill="url(#fct45)"/>
<!-- ear -->
<ellipse cx="452" cy="283" rx="14" ry="25" fill="#cc9a86"/>
<ellipse cx="444" cy="315" rx="6" ry="6" fill="#e8e8f0"/>
<!-- cap -->
<path d="M238 206Q240 112 368 86Q482 76 514 174Q524 240 494 290Q480 240 442 212Q392 150 322 150Q268 165 238 206Z" fill="url(#cpgt45)"/>
<path d="M280 130Q330 100 380 104M400 110Q450 112 486 160M300 150Q340 128 400 140M430 160Q470 180 492 230" fill="none" stroke="#8ccaf6" stroke-width="7" opacity=".55"/>
<path d="M262 170Q300 130 350 128M450 190Q480 210 500 260" fill="none" stroke="#3d84c6" stroke-width="6" opacity=".5"/>
<!-- hair -->
<path d="M430 212Q456 234 462 264L448 264Q444 238 428 222Z" fill="#4a3028"/>
<!-- eyes brows -->
<ellipse cx="287" cy="234" rx="16" ry="7" fill="#3a2822"/><ellipse cx="372" cy="229" rx="18" ry="7.500" fill="#3a2822"/>
<ellipse cx="287" cy="234" rx="26" ry="14" fill="#8a5a4a" opacity=".25"/><ellipse cx="372" cy="229" rx="28" ry="14" fill="#8a5a4a" opacity=".25"/>
<path d="M262 214Q285 204 308 214M345 207Q374 197 404 210" fill="none" stroke="#6a4a3c" stroke-width="6"/>
<!-- nose, lips -->
<path d="M322 245Q310 280 316 290Q330 297 344 288" fill="none" stroke="#b98470" stroke-width="5"/>
<path d="M302 313Q330 300 364 310Q336 330 302 313Z" fill="#d0607a"/>
<!-- glasses -->
<path d="M240 213Q330 188 428 203Q424 256 382 264Q345 264 335 236Q325 226 318 239Q300 277 262 270Q236 256 240 213Z" fill="#f2f6fb" fill-opacity=".38" stroke="#f6f8fc" stroke-width="5"/>
<path d="M270 262Q290 272 308 252M372 258Q400 258 414 232" fill="none" stroke="#ffffff" stroke-width="7" opacity=".7"/>
<path d="M428 203L458 236" stroke="#e8ecf2" stroke-width="6"/>
<!-- stethoscope -->
<path d="M457 296Q506 300 486 360Q460 420 425 455" fill="none" stroke="#8e8e98" stroke-width="6"/>
<path d="M262 305Q234 330 254 390Q270 430 290 452" fill="none" stroke="#8e8e98" stroke-width="6"/>
<circle cx="458" cy="293" r="8" fill="#d02878"/>
<path d="M288 450Q300 490 340 515Q350 560 278 645" fill="none" stroke="#c21f70" stroke-width="10"/>
<path d="M340 515Q360 500 395 492" fill="none" stroke="#c21f70" stroke-width="10"/>
<!-- hand -->
<path d="M372 522Q400 500 442 505Q458 540 450 600Q442 640 420 655L378 655Q358 610 372 522Z" fill="#e2b29e"/>
<path d="M386 545Q412 560 406 592M380 582Q402 596 398 622" fill="none" stroke="#b8826e" stroke-width="5"/>
<path d="M358 522Q352 580 386 602L374 655" fill="none" stroke="#b81a68" stroke-width="9"/>
<circle cx="413" cy="478" r="31" fill="#c21f70"/><circle cx="413" cy="478" r="18" fill="#2a2540"/><circle cx="413" cy="478" r="8" fill="#5a5a80"/>
</g></g></svg>
<span class="a" style="left:317.500px;top:105.500px;font-size:19px;line-height:24px;font-weight:bold;color:#2b2b2b">南京医科大学</span>
<span class="a" style="left:317.500px;top:142.500px;font-size:19px;line-height:24px;font-weight:bold;color:#3c5a87">个人介绍</span>
<i class="a" style="left:400px;top:158px;width:275px;height:6px;background:#9fd3ea"></i>
<span class="a" style="left:317.500px;top:174.600px;font-size:14.240px;line-height:18px;color:#2e2e2e">左边建议先将人物照片裁剪成正方形再插入进来会比较好</span>
<span class="a" style="left:317.500px;top:196px;font-size:14.240px;line-height:18px;color:#2e2e2e">请在这里输入你的正文内容<span style="display:inline-block;width:12.500px"></span>请在这里输入你的正文内容</span>
<span class="a" style="left:317.500px;top:215px;font-size:14.240px;line-height:18px;color:#2e2e2e">请在这里输入你的正文内容<span style="display:inline-block;width:12.500px"></span>请在这里输入你的正文内容</span>
<span class="a" style="left:317.500px;top:237px;font-size:14.240px;line-height:18px;color:#2e2e2e">请在这里输入你的正文内容<span style="display:inline-block;width:12.500px"></span>请在这里输入你的正文内容</span>
<span class="a" style="left:317.500px;top:267.500px;font-size:19px;line-height:24px;font-weight:bold;color:#3c5a87">所获荣誉</span>
<i class="a" style="left:400px;top:282.5px;width:275px;height:6px;background:#9fd3ea"></i>
<span class="a" style="left:317.500px;top:299px;font-size:14.240px;line-height:18px;color:#2e2e2e">请在这里输入你的正文内容<span style="display:inline-block;width:12.500px"></span>请在这里输入你的正文内容</span>
<span class="a" style="left:317.500px;top:319.5px;font-size:14.240px;line-height:18px;color:#2e2e2e">请在这里输入你的正文内容<span style="display:inline-block;width:12.500px"></span>请在这里输入你的正文内容</span>
<span class="a" style="left:317.500px;top:340px;font-size:14.240px;line-height:18px;color:#2e2e2e">请在这里输入你的正文内容<span style="display:inline-block;width:12.500px"></span>请在这里输入你的正文内容</span>
<span class="a" style="left:317.500px;top:361px;font-size:14.240px;line-height:18px;color:#2e2e2e">请在这里输入你的正文内容<span style="display:inline-block;width:12.500px"></span>请在这里输入你的正文内容</span>
</div></div>
<span class="a" style="left:3.500px;top:322.9px;font-size:15.500px;line-height:16px;color:#ececec;letter-spacing:.5px">45</span>
<i class="a" style="left:36px;top:434px;width:158px;height:90px;background:#2e2e2e"></i>
<div class="a" style="left:37px;top:435px;width:156px;height:88px;overflow:hidden;background:#f4f5f7"><div class="a th" style="left:1px;top:1px;width:760px;height:428px;transform:scale(0.20289);transform-origin:0 0">
<svg style="left:0;top:0" width="760" height="428" viewBox="0 0 760 428"><defs><filter id="wmbt46" x="-10%" y="-10%" width="120%" height="120%"><feGaussianBlur stdDeviation="6"/></filter></defs><g filter="url(#wmbt46)" fill="#f7eef1" opacity=".65"><path d="M0 300Q40 280 80 300L120 330Q200 320 260 350L330 340Q400 330 470 350L520 300Q600 270 680 290L760 280V413H0Z"/><path d="M270 170Q330 160 350 190L340 240Q300 250 270 230Z" opacity=".7"/></g></svg>
<i class="a" style="left:0;top:23px;width:19px;height:41px;background:#3c5a87"></i>
<i class="a" style="left:25px;top:23px;width:6px;height:41px;background:#3c5a87"></i>
<span class="a" style="left:49px;top:29px;font-size:25px;line-height:30px;font-weight:bold;color:#3b3b3b">团队介绍页</span>
<i class="a" style="left:42px;top:62px;width:677px;height:5px;background:#3c5a87"></i>
<svg style="left:588px;top:28px" width="23" height="29" viewBox="0 0 23 29"><path d="M1 1Q11.500 3 22 1V15Q21 24 11.500 28Q2 24 1 15Z" fill="#e8c860" stroke="#c8403a" stroke-width="1.400"/><path d="M3.500 4H11.500V20H3.500Z" fill="#3a8040"/><path d="M11.500 4H19.500V20H11.500Z" fill="#3a5a98"/><path d="M3.500 18Q11.500 14 19.500 18V20Q11.500 26 3.500 20Z" fill="#f4f4f4"/><path d="M11.500 6V19M9 8H14M9.500 11Q12 9 13.500 12" stroke="#e8c030" stroke-width="1.200" fill="none"/><path d="M8 19L11.500 14L15 19Z" fill="#d03a30"/></svg>
<span class="a" style="left:621px;top:27px;font-size:14.500px;line-height:22px;font-weight:900;color:#2a2a2a;font-family:'Noto Serif CJK SC','Liberation Serif',serif;letter-spacing:0">南京医科大学</span>
<span class="a" style="left:622px;top:50px;font-size:4.800px;line-height:6px;color:#444;font-family:'Liberation Serif',serif;letter-spacing:.22px">NANJING MEDICAL UNIVERSITY</span>
<i class="a" style="left:0;top:413px;width:760px;height:15px;background:#3c5a87"></i>
<span class="a" style="left:58px;top:416.500px;font-size:7px;line-height:9px;color:#fff;letter-spacing:-.1px">2019/2/22</span>
<span class="a" style="left:320px;top:416.500px;width:120px;text-align:center;font-size:7.300px;line-height:9px;color:#fff;font-weight:bold">——<span style="margin:0 6.500px">博学至精 明德至善</span>——</span>
<span class="a" style="left:693px;top:416.500px;font-size:7px;line-height:9px;color:#fff">46</span>
<svg style="left:75px;top:96px" width="102" height="140" viewBox="0 0 100 137" preserveAspectRatio="xMidYMid slice"><defs><clipPath id="mct46"><rect width="100" height="137"/></clipPath></defs><g clip-path="url(#mct46)"><rect width="100" height="140" fill="#e9eef4"/>
<path d="M0 40L30 50L30 60L0 55Z" fill="#cfdbe6"/>
<path d="M28 70Q40 52 62 52Q88 56 96 80L98 140H20Z" fill="#3f74cc"/>
<path d="M14 120Q40 105 70 118L72 134Q40 140 12 132Z" fill="#d8a890"/>
<ellipse cx="52" cy="32" rx="15" ry="19" fill="#dcae98"/>
<path d="M36 24Q40 4 58 6Q72 10 68 28Q56 16 36 24Z" fill="#a9d3ee"/>
<path d="M40 38Q50 50 64 40L62 50Q52 56 42 48Z" fill="#c9d6e2"/>
</g></svg>
<svg style="left:75px;top:252px;overflow:hidden" width="102" height="135" viewBox="130 60 470 620" preserveAspectRatio="xMidYMid slice"><defs><clipPath id="cpt46"><circle cx="361" cy="350" r="300"/></clipPath>
<linearGradient id="bgt46" x1="0" y1="0" x2="1" y2=".35"><stop offset="0" stop-color="#0b93ba"/><stop offset=".45" stop-color="#06a6cd"/><stop offset="1" stop-color="#00b9e2"/></linearGradient>
<linearGradient id="sct46" x1="0" y1="0" x2="1" y2="0"><stop offset="0" stop-color="#4f8fdc"/><stop offset=".55" stop-color="#66a6ea"/><stop offset="1" stop-color="#4c8cd8"/></linearGradient>
<radialGradient id="fct46" cx=".38" cy=".42" r=".7"><stop offset="0" stop-color="#f0cdbb"/><stop offset=".6" stop-color="#e0b29e"/><stop offset="1" stop-color="#bb8671"/></radialGradient>
<radialGradient id="cpgt46" cx=".4" cy=".3" r=".8"><stop offset="0" stop-color="#74bdf0"/><stop offset=".6" stop-color="#55a3e0"/><stop offset="1" stop-color="#3f88cc"/></radialGradient>
<filter id="blt46" x="-5%" y="-5%" width="110%" height="110%"><feGaussianBlur stdDeviation="2.200"/></filter>
<filter id="bht46" x="-20%" y="-20%" width="140%" height="140%"><feGaussianBlur stdDeviation="9"/></filter></defs><rect x="0" y="0" width="728" height="693" fill="url(#bgt46)"/>
<ellipse cx="560" cy="330" rx="120" ry="200" fill="#10c4ea" opacity=".35" filter="url(#bht46)"/>
<g filter="url(#blt46)">
<!-- neck -->
<path d="M318 340L312 446Q372 486 452 440L446 300Z" fill="#d3a28e"/>
<path d="M330 372Q380 392 440 330L446 420Q380 440 318 410Z" fill="#b98470" opacity=".55"/>
<!-- scrubs -->
<path d="M125 610Q150 492 205 466L308 438Q372 482 462 438L560 466Q612 498 625 590L625 700L125 700Z" fill="url(#sct46)"/>
<path d="M308 438Q372 482 462 438" fill="none" stroke="#3f7fd0" stroke-width="6"/>
<path d="M190 540Q250 490 300 540Q260 560 230 620Z" fill="#7fb6f2" opacity=".45"/>
<path d="M470 480Q540 490 575 560Q560 620 520 640Q500 560 470 480Z" fill="#86bcf5" opacity=".45"/>
<path d="M150 560Q170 620 160 690" stroke="#3a78c8" stroke-width="8" fill="none" opacity=".5"/>
<!-- face -->
<path d="M260 196Q246 285 286 342Q322 394 360 382Q420 352 446 290Q470 228 442 176Q350 128 260 196Z" fill="url(#fct46)"/>
<!-- ear -->
<ellipse cx="452" cy="283" rx="14" ry="25" fill="#cc9a86"/>
<ellipse cx="444" cy="315" rx="6" ry="6" fill="#e8e8f0"/>
<!-- cap -->
<path d="M238 206Q240 112 368 86Q482 76 514 174Q524 240 494 290Q480 240 442 212Q392 150 322 150Q268 165 238 206Z" fill="url(#cpgt46)"/>
<path d="M280 130Q330 100 380 104M400 110Q450 112 486 160M300 150Q340 128 400 140M430 160Q470 180 492 230" fill="none" stroke="#8ccaf6" stroke-width="7" opacity=".55"/>
<path d="M262 170Q300 130 350 128M450 190Q480 210 500 260" fill="none" stroke="#3d84c6" stroke-width="6" opacity=".5"/>
<!-- hair -->
<path d="M430 212Q456 234 462 264L448 264Q444 238 428 222Z" fill="#4a3028"/>
<!-- eyes brows -->
<ellipse cx="287" cy="234" rx="16" ry="7" fill="#3a2822"/><ellipse cx="372" cy="229" rx="18" ry="7.500" fill="#3a2822"/>
<ellipse cx="287" cy="234" rx="26" ry="14" fill="#8a5a4a" opacity=".25"/><ellipse cx="372" cy="229" rx="28" ry="14" fill="#8a5a4a" opacity=".25"/>
<path d="M262 214Q285 204 308 214M345 207Q374 197 404 210" fill="none" stroke="#6a4a3c" stroke-width="6"/>
<!-- nose, lips -->
<path d="M322 245Q310 280 316 290Q330 297 344 288" fill="none" stroke="#b98470" stroke-width="5"/>
<path d="M302 313Q330 300 364 310Q336 330 302 313Z" fill="#d0607a"/>
<!-- glasses -->
<path d="M240 213Q330 188 428 203Q424 256 382 264Q345 264 335 236Q325 226 318 239Q300 277 262 270Q236 256 240 213Z" fill="#f2f6fb" fill-opacity=".38" stroke="#f6f8fc" stroke-width="5"/>
<path d="M270 262Q290 272 308 252M372 258Q400 258 414 232" fill="none" stroke="#ffffff" stroke-width="7" opacity=".7"/>
<path d="M428 203L458 236" stroke="#e8ecf2" stroke-width="6"/>
<!-- stethoscope -->
<path d="M457 296Q506 300 486 360Q460 420 425 455" fill="none" stroke="#8e8e98" stroke-width="6"/>
<path d="M262 305Q234 330 254 390Q270 430 290 452" fill="none" stroke="#8e8e98" stroke-width="6"/>
<circle cx="458" cy="293" r="8" fill="#d02878"/>
<path d="M288 450Q300 490 340 515Q350 560 278 645" fill="none" stroke="#c21f70" stroke-width="10"/>
<path d="M340 515Q360 500 395 492" fill="none" stroke="#c21f70" stroke-width="10"/>
<!-- hand -->
<path d="M372 522Q400 500 442 505Q458 540 450 600Q442 640 420 655L378 655Q358 610 372 522Z" fill="#e2b29e"/>
<path d="M386 545Q412 560 406 592M380 582Q402 596 398 622" fill="none" stroke="#b8826e" stroke-width="5"/>
<path d="M358 522Q352 580 386 602L374 655" fill="none" stroke="#b81a68" stroke-width="9"/>
<circle cx="413" cy="478" r="31" fill="#c21f70"/><circle cx="413" cy="478" r="18" fill="#2a2540"/><circle cx="413" cy="478" r="8" fill="#5a5a80"/>
</g></svg>
<span class="a" style="left:230px;top:112px;font-size:19px;line-height:24px;font-weight:bold;color:#3c5a87">南小医</span>
<span class="a" style="left:221px;top:147px;font-size:14px;line-height:18.800px;color:#333"><span style="color:#c0504d;font-size:8px;vertical-align:middle">• </span>请在这里输入你的正文内容<span style="display:inline-block;width:12px"></span>请在这里输入你的正文内容</span>
<span class="a" style="left:221px;top:165.8px;font-size:14px;line-height:18.800px;color:#333"><span style="color:#c0504d;font-size:8px;vertical-align:middle">• </span>请在这里输入你的正文内容<span style="display:inline-block;width:12px"></span>请在这里输入你的正文内容</span>
<span class="a" style="left:221px;top:184.6px;font-size:14px;line-height:18.800px;color:#333"><span style="color:#c0504d;font-size:8px;vertical-align:middle">• </span>请在这里输入你的正文内容<span style="display:inline-block;width:12px"></span>请在这里输入你的正文内容</span>
<span class="a" style="left:221px;top:203.4px;font-size:14px;line-height:18.800px;color:#333"><span style="color:#c0504d;font-size:8px;vertical-align:middle">• </span>请在这里输入你的正文内容<span style="display:inline-block;width:12px"></span>请在这里输入你的正文内容</span>
<span class="a" style="left:230px;top:268px;font-size:19px;line-height:24px;font-weight:bold;color:#3c5a87">南小医</span>
<span class="a" style="left:221px;top:301px;font-size:14px;line-height:18.800px;color:#333"><span style="color:#c0504d;font-size:8px;vertical-align:middle">• </span>请在这里输入你的正文内容<span style="display:inline-block;width:12px"></span>请在这里输入你的正文内容</span>
<span class="a" style="left:221px;top:319.8px;font-size:14px;line-height:18.800px;color:#333"><span style="color:#c0504d;font-size:8px;vertical-align:middle">• </span>请在这里输入你的正文内容<span style="display:inline-block;width:12px"></span>请在这里输入你的正文内容</span>
<span class="a" style="left:221px;top:338.6px;font-size:14px;line-height:18.800px;color:#333"><span style="color:#c0504d;font-size:8px;vertical-align:middle">• </span>请在这里输入你的正文内容<span style="display:inline-block;width:12px"></span>请在这里输入你的正文内容</span>
<span class="a" style="left:221px;top:357.4px;font-size:14px;line-height:18.800px;color:#333"><span style="color:#c0504d;font-size:8px;vertical-align:middle">• </span>请在这里输入你的正文内容<span style="display:inline-block;width:12px"></span>请在这里输入你的正文内容</span>
</div></div>
<span class="a" style="left:3.500px;top:431.2px;font-size:15.500px;line-height:16px;color:#ececec;letter-spacing:.5px">46</span>
<i class="a" style="left:36px;top:542px;width:158px;height:90px;background:#2e2e2e"></i>
<div class="a" style="left:37px;top:543px;width:156px;height:88px;overflow:hidden;background:#f4f5f7"><div class="a th" style="left:1px;top:1px;width:760px;height:428px;transform:scale(0.20289);transform-origin:0 0">
<svg style="left:0;top:0" width="760" height="428" viewBox="0 0 760 428"><defs><filter id="wmbt47" x="-10%" y="-10%" width="120%" height="120%"><feGaussianBlur stdDeviation="6"/></filter></defs><g filter="url(#wmbt47)" fill="#f7eef1" opacity=".65"><path d="M0 300Q40 280 80 300L120 330Q200 320 260 350L330 340Q400 330 470 350L520 300Q600 270 680 290L760 280V413H0Z"/><path d="M270 170Q330 160 350 190L340 240Q300 250 270 230Z" opacity=".7"/></g></svg>
<i class="a" style="left:0;top:23px;width:19px;height:41px;background:#3c5a87"></i>
<i class="a" style="left:25px;top:23px;width:6px;height:41px;background:#3c5a87"></i>
<span class="a" style="left:49px;top:29px;font-size:25px;line-height:30px;font-weight:bold;color:#3b3b3b">团队介绍页</span>
<i class="a" style="left:42px;top:62px;width:677px;height:5px;background:#3c5a87"></i>
<svg style="left:588px;top:28px" width="23" height="29" viewBox="0 0 23 29"><path d="M1 1Q11.500 3 22 1V15Q21 24 11.500 28Q2 24 1 15Z" fill="#e8c860" stroke="#c8403a" stroke-width="1.400"/><path d="M3.500 4H11.500V20H3.500Z" fill="#3a8040"/><path d="M11.500 4H19.500V20H11.500Z" fill="#3a5a98"/><path d="M3.500 18Q11.500 14 19.500 18V20Q11.500 26 3.500 20Z" fill="#f4f4f4"/><path d="M11.500 6V19M9 8H14M9.500 11Q12 9 13.500 12" stroke="#e8c030" stroke-width="1.200" fill="none"/><path d="M8 19L11.500 14L15 19Z" fill="#d03a30"/></svg>
<span class="a" style="left:621px;top:27px;font-size:14.500px;line-height:22px;font-weight:900;color:#2a2a2a;font-family:'Noto Serif CJK SC','Liberation Serif',serif;letter-spacing:0">南京医科大学</span>
<span class="a" style="left:622px;top:50px;font-size:4.800px;line-height:6px;color:#444;font-family:'Liberation Serif',serif;letter-spacing:.22px">NANJING MEDICAL UNIVERSITY</span>
<i class="a" style="left:0;top:413px;width:760px;height:15px;background:#3c5a87"></i>
<span class="a" style="left:58px;top:416.500px;font-size:7px;line-height:9px;color:#fff;letter-spacing:-.1px">2019/2/22</span>
<span class="a" style="left:320px;top:416.500px;width:120px;text-align:center;font-size:7.300px;line-height:9px;color:#fff;font-weight:bold">——<span style="margin:0 6.500px">博学至精 明德至善</span>——</span>
<span class="a" style="left:693px;top:416.500px;font-size:7px;line-height:9px;color:#fff">47</span>
<i class="a" style="left:97px;top:98px;width:134px;height:134px;border-radius:50%;border:3px solid #3c5a87;background:#fdfdfd"></i>
<svg style="left:104px;top:105px" width="120" height="120" viewBox="0 0 100 100" preserveAspectRatio="xMidYMid slice"><defs><clipPath id="mct47"><circle cx="50" cy="50" r="50"/></clipPath></defs><g clip-path="url(#mct47)"><rect width="100" height="140" fill="#e9eef4"/>
<path d="M0 40L30 50L30 60L0 55Z" fill="#cfdbe6"/>
<path d="M28 70Q40 52 62 52Q88 56 96 80L98 140H20Z" fill="#3f74cc"/>
<path d="M14 120Q40 105 70 118L72 134Q40 140 12 132Z" fill="#d8a890"/>
<ellipse cx="52" cy="32" rx="15" ry="19" fill="#dcae98"/>
<path d="M36 24Q40 4 58 6Q72 10 68 28Q56 16 36 24Z" fill="#a9d3ee"/>
<path d="M40 38Q50 50 64 40L62 50Q52 56 42 48Z" fill="#c9d6e2"/>
</g></svg>
<span class="a" style="left:104px;top:248px;width:120px;text-align:center;font-size:19px;line-height:24px;font-weight:bold;color:#3c5a87">南小医</span>
<i class="a" style="left:143px;top:276px;width:42px;height:3px;background:#3c5a87"></i>
<span class="a" style="left:98px;top:287px;width:132px;white-space:normal;text-align:justify;font-size:14.300px;line-height:18.400px;color:#333">南京医科大学创建于1934年，时名江苏省立医政学院。1957年由镇江迁至南京，更名为南京医学院。</span>
<i class="a" style="left:315px;top:98px;width:134px;height:134px;border-radius:50%;border:3px solid #3c5a87;background:#fdfdfd"></i>
<svg style="left:309.3px;top:94.5px" width="146.6" height="139.5" viewBox="0 0 728 693">
<defs><clipPath id="cpt47"><circle cx="361" cy="350" r="300"/></clipPath>
<linearGradient id="bgt47" x1="0" y1="0" x2="1" y2=".35"><stop offset="0" stop-color="#0b93ba"/><stop offset=".45" stop-color="#06a6cd"/><stop offset="1" stop-color="#00b9e2"/></linearGradient>
<linearGradient id="sct47" x1="0" y1="0" x2="1" y2="0"><stop offset="0" stop-color="#4f8fdc"/><stop offset=".55" stop-color="#66a6ea"/><stop offset="1" stop-color="#4c8cd8"/></linearGradient>
<radialGradient id="fct47" cx=".38" cy=".42" r=".7"><stop offset="0" stop-color="#f0cdbb"/><stop offset=".6" stop-color="#e0b29e"/><stop offset="1" stop-color="#bb8671"/></radialGradient>
<radialGradient id="cpgt47" cx=".4" cy=".3" r=".8"><stop offset="0" stop-color="#74bdf0"/><stop offset=".6" stop-color="#55a3e0"/><stop offset="1" stop-color="#3f88cc"/></radialGradient>
<filter id="blt47" x="-5%" y="-5%" width="110%" height="110%"><feGaussianBlur stdDeviation="2.200"/></filter>
<filter id="bht47" x="-20%" y="-20%" width="140%" height="140%"><feGaussianBlur stdDeviation="9"/></filter></defs>
<circle cx="361" cy="350" r="303" fill="#3a4f80"/>
<g clip-path="url(#cpt47)">
<rect x="0" y="0" width="728" height="693" fill="url(#bgt47)"/>
<ellipse cx="560" cy="330" rx="120" ry="200" fill="#10c4ea" opacity=".35" filter="url(#bht47)"/>
<g filter="url(#blt47)">
<!-- neck -->
<path d="M318 340L312 446Q372 486 452 440L446 300Z" fill="#d3a28e"/>
<path d="M330 372Q380 392 440 330L446 420Q380 440 318 410Z" fill="#b98470" opacity=".55"/>
<!-- scrubs -->
<path d="M125 610Q150 492 205 466L308 438Q372 482 462 438L560 466Q612 498 625 590L625 700L125 700Z" fill="url(#sct47)"/>
<path d="M308 438Q372 482 462 438" fill="none" stroke="#3f7fd0" stroke-width="6"/>
<path d="M190 540Q250 490 300 540Q260 560 230 620Z" fill="#7fb6f2" opacity=".45"/>
<path d="M470 480Q540 490 575 560Q560 620 520 640Q500 560 470 480Z" fill="#86bcf5" opacity=".45"/>
<path d="M150 560Q170 620 160 690" stroke="#3a78c8" stroke-width="8" fill="none" opacity=".5"/>
<!-- face -->
<path d="M260 196Q246 285 286 342Q322 394 360 382Q420 352 446 290Q470 228 442 176Q350 128 260 196Z" fill="url(#fct47)"/>
<!-- ear -->
<ellipse cx="452" cy="283" rx="14" ry="25" fill="#cc9a86"/>
<ellipse cx="444" cy="315" rx="6" ry="6" fill="#e8e8f0"/>
<!-- cap -->
<path d="M238 206Q240 112 368 86Q482 76 514 174Q524 240 494 290Q480 240 442 212Q392 150 322 150Q268 165 238 206Z" fill="url(#cpgt47)"/>
<path d="M280 130Q330 100 380 104M400 110Q450 112 486 160M300 150Q340 128 400 140M430 160Q470 180 492 230" fill="none" stroke="#8ccaf6" stroke-width="7" opacity=".55"/>
<path d="M262 170Q300 130 350 128M450 190Q480 210 500 260" fill="none" stroke="#3d84c6" stroke-width="6" opacity=".5"/>
<!-- hair -->
<path d="M430 212Q456 234 462 264L448 264Q444 238 428 222Z" fill="#4a3028"/>
<!-- eyes brows -->
<ellipse cx="287" cy="234" rx="16" ry="7" fill="#3a2822"/><ellipse cx="372" cy="229" rx="18" ry="7.500" fill="#3a2822"/>
<ellipse cx="287" cy="234" rx="26" ry="14" fill="#8a5a4a" opacity=".25"/><ellipse cx="372" cy="229" rx="28" ry="14" fill="#8a5a4a" opacity=".25"/>
<path d="M262 214Q285 204 308 214M345 207Q374 197 404 210" fill="none" stroke="#6a4a3c" stroke-width="6"/>
<!-- nose, lips -->
<path d="M322 245Q310 280 316 290Q330 297 344 288" fill="none" stroke="#b98470" stroke-width="5"/>
<path d="M302 313Q330 300 364 310Q336 330 302 313Z" fill="#d0607a"/>
<!-- glasses -->
<path d="M240 213Q330 188 428 203Q424 256 382 264Q345 264 335 236Q325 226 318 239Q300 277 262 270Q236 256 240 213Z" fill="#f2f6fb" fill-opacity=".38" stroke="#f6f8fc" stroke-width="5"/>
<path d="M270 262Q290 272 308 252M372 258Q400 258 414 232" fill="none" stroke="#ffffff" stroke-width="7" opacity=".7"/>
<path d="M428 203L458 236" stroke="#e8ecf2" stroke-width="6"/>
<!-- stethoscope -->
<path d="M457 296Q506 300 486 360Q460 420 425 455" fill="none" stroke="#8e8e98" stroke-width="6"/>
<path d="M262 305Q234 330 254 390Q270 430 290 452" fill="none" stroke="#8e8e98" stroke-width="6"/>
<circle cx="458" cy="293" r="8" fill="#d02878"/>
<path d="M288 450Q300 490 340 515Q350 560 278 645" fill="none" stroke="#c21f70" stroke-width="10"/>
<path d="M340 515Q360 500 395 492" fill="none" stroke="#c21f70" stroke-width="10"/>
<!-- hand -->
<path d="M372 522Q400 500 442 505Q458 540 450 600Q442 640 420 655L378 655Q358 610 372 522Z" fill="#e2b29e"/>
<path d="M386 545Q412 560 406 592M380 582Q402 596 398 622" fill="none" stroke="#b8826e" stroke-width="5"/>
<path d="M358 522Q352 580 386 602L374 655" fill="none" stroke="#b81a68" stroke-width="9"/>
<circle cx="413" cy="478" r="31" fill="#c21f70"/><circle cx="413" cy="478" r="18" fill="#2a2540"/><circle cx="413" cy="478" r="8" fill="#5a5a80"/>
</g></g></svg>
<span class="a" style="left:322px;top:248px;width:120px;text-align:center;font-size:19px;line-height:24px;font-weight:bold;color:#3c5a87">南小医</span>
<i class="a" style="left:361px;top:276px;width:42px;height:3px;background:#3c5a87"></i>
<span class="a" style="left:316px;top:287px;width:132px;white-space:normal;text-align:justify;font-size:14.300px;line-height:18.400px;color:#333">南京医科大学创建于1934年，时名江苏省立医政学院。1957年由镇江迁至南京，更名为南京医学院。</span>
<i class="a" style="left:533.5px;top:98px;width:134px;height:134px;border-radius:50%;border:3px solid #3c5a87;background:#fdfdfd"></i>
<svg style="left:540.5px;top:105px" width="120" height="120" viewBox="0 0 100 100"><defs><clipPath id="sgt47"><circle cx="50" cy="50" r="50"/></clipPath></defs><g clip-path="url(#sgt47)"><rect width="100" height="100" fill="#1f7a6a"/>
<circle cx="30" cy="35" r="18" fill="#3fb8a8"/><circle cx="68" cy="30" r="16" fill="#2e9a8c"/><path d="M10 60Q40 45 60 60Q85 50 100 70V100H0Z" fill="#48c2b4"/><circle cx="50" cy="20" r="10" fill="#0f4a44"/><path d="M35 70Q50 60 70 75" stroke="#bfeee6" stroke-width="6" fill="none"/><circle cx="75" cy="55" r="9" fill="#8fded2"/></g></svg>
<span class="a" style="left:540.5px;top:248px;width:120px;text-align:center;font-size:19px;line-height:24px;font-weight:bold;color:#3c5a87">南小医</span>
<i class="a" style="left:579.5px;top:276px;width:42px;height:3px;background:#3c5a87"></i>
<span class="a" style="left:534.5px;top:287px;width:132px;white-space:normal;text-align:justify;font-size:14.300px;line-height:18.400px;color:#333">南京医科大学创建于1934年，时名江苏省立医政学院。1957年由镇江迁至南京，更名为南京医学院。</span>
</div></div>
<span class="a" style="left:3.500px;top:539.2px;font-size:15.500px;line-height:16px;color:#ececec;letter-spacing:.5px">47</span>
<svg style="left:16px;top:306.5px" width="6" height="6" viewBox="0 0 6 6"><path d="M5.500 0V5.500H0Z" fill="#e8e8e8"/></svg>
<span class="a" style="left:30px;top:302px;font-size:12px;line-height:14px;color:#f0f0f0;letter-spacing:.3px">13 人物介绍</span>
<svg style="left:16px;top:658px" width="6" height="6" viewBox="0 0 6 6"><path d="M5.500 0V5.500H0Z" fill="#e8e8e8"/></svg>
<span class="a" style="left:30px;top:653.5px;font-size:12px;line-height:14px;color:#f0f0f0;letter-spacing:.3px">14 时间轴</span>
<svg style="left:214px;top:189px" width="16" height="484" viewBox="214 189 16 484"><defs><pattern id="sbp" width="2" height="2" patternUnits="userSpaceOnUse"><rect width="2" height="2" fill="#5a5a5a"/><rect width="1" height="1" fill="#757575"/><rect x="1" y="1" width="1" height="1" fill="#757575"/></pattern></defs>
<rect x="215" y="205" width="14" height="453" fill="url(#sbp)"/>
<rect x="215" y="191" width="14" height="14" fill="#b4b4b4"/><path d="M218.500 200.500H225.500L222 196.500Z" fill="#333"/>
<rect x="215" y="658" width="14" height="14" fill="#b4b4b4"/><path d="M218.500 663H225.500L222 667Z" fill="#333"/>
<rect x="215" y="421" width="14" height="21" fill="#b4b4b4"/></svg>

<!-- ===== SLIDE ===== -->
<div class="a slide" style="left:413px;top:199px;width:760px;height:428px;background:#f4f5f7;overflow:hidden">
<svg style="left:0;top:0" width="760" height="428" viewBox="0 0 760 428"><defs><filter id="wmbm" x="-10%" y="-10%" width="120%" height="120%"><feGaussianBlur stdDeviation="6"/></filter></defs><g filter="url(#wmbm)" fill="#f7eef1" opacity=".65"><path d="M0 300Q40 280 80 300L120 330Q200 320 260 350L330 340Q400 330 470 350L520 300Q600 270 680 290L760 280V413H0Z"/><path d="M270 170Q330 160 350 190L340 240Q300 250 270 230Z" opacity=".7"/></g></svg>
<i class="a" style="left:0;top:23px;width:19px;height:41px;background:#3c5a87"></i>
<i class="a" style="left:25px;top:23px;width:6px;height:41px;background:#3c5a87"></i>
<span class="a" style="left:49px;top:29px;font-size:25px;line-height:30px;font-weight:bold;color:#3b3b3b">人物介绍页</span>
<i class="a" style="left:42px;top:64px;width:677px;height:1px;background:#3c5a87"></i>
<svg style="left:588px;top:28px" width="23" height="29" viewBox="0 0 23 29"><path d="M1 1Q11.500 3 22 1V15Q21 24 11.500 28Q2 24 1 15Z" fill="#e8c860" stroke="#c8403a" stroke-width="1.400"/><path d="M3.500 4H11.500V20H3.500Z" fill="#3a8040"/><path d="M11.500 4H19.500V20H11.500Z" fill="#3a5a98"/><path d="M3.500 18Q11.500 14 19.500 18V20Q11.500 26 3.500 20Z" fill="#f4f4f4"/><path d="M11.500 6V19M9 8H14M9.500 11Q12 9 13.500 12" stroke="#e8c030" stroke-width="1.200" fill="none"/><path d="M8 19L11.500 14L15 19Z" fill="#d03a30"/></svg>
<span class="a" style="left:621px;top:27px;font-size:14.500px;line-height:22px;font-weight:900;color:#2a2a2a;font-family:'Noto Serif CJK SC','Liberation Serif',serif;letter-spacing:0">南京医科大学</span>
<span class="a" style="left:622px;top:50px;font-size:4.800px;line-height:6px;color:#444;font-family:'Liberation Serif',serif;letter-spacing:.22px">NANJING MEDICAL UNIVERSITY</span>
<i class="a" style="left:0;top:413px;width:760px;height:15px;background:#3c5a87"></i>
<span class="a" style="left:58px;top:416.500px;font-size:7px;line-height:9px;color:#fff;letter-spacing:-.1px">2019/2/22</span>
<span class="a" style="left:320px;top:416.500px;width:120px;text-align:center;font-size:7.300px;line-height:9px;color:#fff;font-weight:bold">——<span style="margin:0 6.500px">博学至精 明德至善</span>——</span>
<span class="a" style="left:693px;top:416.500px;font-size:7px;line-height:9px;color:#fff">45</span>
<i class="a" style="left:274px;top:104px;width:2px;height:278px;background:#34507e"></i>
<svg style="left:47px;top:141px" width="210" height="200" viewBox="0 0 728 693">
<defs><clipPath id="cpm"><circle cx="361" cy="350" r="300"/></clipPath>
<linearGradient id="bgm" x1="0" y1="0" x2="1" y2=".35"><stop offset="0" stop-color="#0b93ba"/><stop offset=".45" stop-color="#06a6cd"/><stop offset="1" stop-color="#00b9e2"/></linearGradient>
<linearGradient id="scm" x1="0" y1="0" x2="1" y2="0"><stop offset="0" stop-color="#4f8fdc"/><stop offset=".55" stop-color="#66a6ea"/><stop offset="1" stop-color="#4c8cd8"/></linearGradient>
<radialGradient id="fcm" cx=".38" cy=".42" r=".7"><stop offset="0" stop-color="#f0cdbb"/><stop offset=".6" stop-color="#e0b29e"/><stop offset="1" stop-color="#bb8671"/></radialGradient>
<radialGradient id="cpgm" cx=".4" cy=".3" r=".8"><stop offset="0" stop-color="#74bdf0"/><stop offset=".6" stop-color="#55a3e0"/><stop offset="1" stop-color="#3f88cc"/></radialGradient>
<filter id="blm" x="-5%" y="-5%" width="110%" height="110%"><feGaussianBlur stdDeviation="2.200"/></filter>
<filter id="bhm" x="-20%" y="-20%" width="140%" height="140%"><feGaussianBlur stdDeviation="9"/></filter></defs>
<circle cx="361" cy="350" r="303" fill="#3a4f80"/>
<g clip-path="url(#cpm)">
<rect x="0" y="0" width="728" height="693" fill="url(#bgm)"/>
<ellipse cx="560" cy="330" rx="120" ry="200" fill="#10c4ea" opacity=".35" filter="url(#bhm)"/>
<g filter="url(#blm)">
<!-- neck -->
<path d="M318 340L312 446Q372 486 452 440L446 300Z" fill="#d3a28e"/>
<path d="M330 372Q380 392 440 330L446 420Q380 440 318 410Z" fill="#b98470" opacity=".55"/>
<!-- scrubs -->
<path d="M125 610Q150 492 205 466L308 438Q372 482 462 438L560 466Q612 498 625 590L625 700L125 700Z" fill="url(#scm)"/>
<path d="M308 438Q372 482 462 438" fill="none" stroke="#3f7fd0" stroke-width="6"/>
<path d="M190 540Q250 490 300 540Q260 560 230 620Z" fill="#7fb6f2" opacity=".45"/>
<path d="M470 480Q540 490 575 560Q560 620 520 640Q500 560 470 480Z" fill="#86bcf5" opacity=".45"/>
<path d="M150 560Q170 620 160 690" stroke="#3a78c8" stroke-width="8" fill="none" opacity=".5"/>
<!-- face -->
<path d="M260 196Q246 285 286 342Q322 394 360 382Q420 352 446 290Q470 228 442 176Q350 128 260 196Z" fill="url(#fcm)"/>
<!-- ear -->
<ellipse cx="452" cy="283" rx="14" ry="25" fill="#cc9a86"/>
<ellipse cx="444" cy="315" rx="6" ry="6" fill="#e8e8f0"/>
<!-- cap -->
<path d="M238 206Q240 112 368 86Q482 76 514 174Q524 240 494 290Q480 240 442 212Q392 150 322 150Q268 165 238 206Z" fill="url(#cpgm)"/>
<path d="M280 130Q330 100 380 104M400 110Q450 112 486 160M300 150Q340 128 400 140M430 160Q470 180 492 230" fill="none" stroke="#8ccaf6" stroke-width="7" opacity=".55"/>
<path d="M262 170Q300 130 350 128M450 190Q480 210 500 260" fill="none" stroke="#3d84c6" stroke-width="6" opacity=".5"/>
<!-- hair -->
<path d="M430 212Q456 234 462 264L448 264Q444 238 428 222Z" fill="#4a3028"/>
<!-- eyes brows -->
<ellipse cx="287" cy="234" rx="16" ry="7" fill="#3a2822"/><ellipse cx="372" cy="229" rx="18" ry="7.500" fill="#3a2822"/>
<ellipse cx="287" cy="234" rx="26" ry="14" fill="#8a5a4a" opacity=".25"/><ellipse cx="372" cy="229" rx="28" ry="14" fill="#8a5a4a" opacity=".25"/>
<path d="M262 214Q285 204 308 214M345 207Q374 197 404 210" fill="none" stroke="#6a4a3c" stroke-width="6"/>
<!-- nose, lips -->
<path d="M322 245Q310 280 316 290Q330 297 344 288" fill="none" stroke="#b98470" stroke-width="5"/>
<path d="M302 313Q330 300 364 310Q336 330 302 313Z" fill="#d0607a"/>
<!-- glasses -->
<path d="M240 213Q330 188 428 203Q424 256 382 264Q345 264 335 236Q325 226 318 239Q300 277 262 270Q236 256 240 213Z" fill="#f2f6fb" fill-opacity=".38" stroke="#f6f8fc" stroke-width="5"/>
<path d="M270 262Q290 272 308 252M372 258Q400 258 414 232" fill="none" stroke="#ffffff" stroke-width="7" opacity=".7"/>
<path d="M428 203L458 236" stroke="#e8ecf2" stroke-width="6"/>
<!-- stethoscope -->
<path d="M457 296Q506 300 486 360Q460 420 425 455" fill="none" stroke="#8e8e98" stroke-width="6"/>
<path d="M262 305Q234 330 254 390Q270 430 290 452" fill="none" stroke="#8e8e98" stroke-width="6"/>
<circle cx="458" cy="293" r="8" fill="#d02878"/>
<path d="M288 450Q300 490 340 515Q350 560 278 645" fill="none" stroke="#c21f70" stroke-width="10"/>
<path d="M340 515Q360 500 395 492" fill="none" stroke="#c21f70" stroke-width="10"/>
<!-- hand -->
<path d="M372 522Q400 500 442 505Q458 540 450 600Q442 640 420 655L378 655Q358 610 372 522Z" fill="#e2b29e"/>
<path d="M386 545Q412 560 406 592M380 582Q402 596 398 622" fill="none" stroke="#b8826e" stroke-width="5"/>
<path d="M358 522Q352 580 386 602L374 655" fill="none" stroke="#b81a68" stroke-width="9"/>
<circle cx="413" cy="478" r="31" fill="#c21f70"/><circle cx="413" cy="478" r="18" fill="#2a2540"/><circle cx="413" cy="478" r="8" fill="#5a5a80"/>
</g></g></svg>
<span class="a" style="left:317.500px;top:105.500px;font-size:19px;line-height:24px;font-weight:bold;color:#2b2b2b">南京医科大学</span>
<span class="a" style="left:317.500px;top:142.500px;font-size:19px;line-height:24px;font-weight:bold;color:#3c5a87">个人介绍</span>
<svg style="left:400px;top:158px" width="275" height="6" viewBox="0 0 275 6"><defs><pattern id="hma" width="3.700" height="6" patternUnits="userSpaceOnUse"><path d="M-0.500 6L3.200 0M3.200 6L6.900 0M-4.200 6L-0.500 0" stroke="#8ccae8" stroke-width="1.100"/></pattern></defs><rect width="275" height="6" fill="url(#hma)"/></svg>
<span class="a" style="left:317.500px;top:174.600px;font-size:14.240px;line-height:18px;color:#2e2e2e">左边建议先将人物照片裁剪成正方形再插入进来会比较好</span>
<span class="a" style="left:317.500px;top:196px;font-size:14.240px;line-height:18px;color:#2e2e2e">请在这里输入你的正文内容<span style="display:inline-block;width:12.500px"></span>请在这里输入你的正文内容</span>
<span class="a" style="left:317.500px;top:215px;font-size:14.240px;line-height:18px;color:#2e2e2e">请在这里输入你的正文内容<span style="display:inline-block;width:12.500px"></span>请在这里输入你的正文内容</span>
<span class="a" style="left:317.500px;top:237px;font-size:14.240px;line-height:18px;color:#2e2e2e">请在这里输入你的正文内容<span style="display:inline-block;width:12.500px"></span>请在这里输入你的正文内容</span>
<span class="a" style="left:317.500px;top:267.500px;font-size:19px;line-height:24px;font-weight:bold;color:#3c5a87">所获荣誉</span>
<svg style="left:400px;top:282.5px" width="275" height="6" viewBox="0 0 275 6"><defs><pattern id="hmb" width="3.700" height="6" patternUnits="userSpaceOnUse"><path d="M-0.500 6L3.200 0M3.200 6L6.900 0M-4.200 6L-0.500 0" stroke="#8ccae8" stroke-width="1.100"/></pattern></defs><rect width="275" height="6" fill="url(#hmb)"/></svg>
<span class="a" style="left:317.500px;top:299px;font-size:14.240px;line-height:18px;color:#2e2e2e">请在这里输入你的正文内容<span style="display:inline-block;width:12.500px"></span>请在这里输入你的正文内容</span>
<span class="a" style="left:317.500px;top:319.5px;font-size:14.240px;line-height:18px;color:#2e2e2e">请在这里输入你的正文内容<span style="display:inline-block;width:12.500px"></span>请在这里输入你的正文内容</span>
<span class="a" style="left:317.500px;top:340px;font-size:14.240px;line-height:18px;color:#2e2e2e">请在这里输入你的正文内容<span style="display:inline-block;width:12.500px"></span>请在这里输入你的正文内容</span>
<span class="a" style="left:317.500px;top:361px;font-size:14.240px;line-height:18px;color:#2e2e2e">请在这里输入你的正文内容<span style="display:inline-block;width:12.500px"></span>请在这里输入你的正文内容</span>
</div>
<svg style="left:0;top:0" width="1296" height="693" viewBox="0 0 1296 693"><g fill="none" stroke="#a88f8f" stroke-width="1" stroke-dasharray="4 3" opacity=".75"><path d="M235 263.500H1296M235 269.500H1296M235 580.500H1296M235 587.500H1296M454.500 189V637M1131.500 189V637"/></g></svg>

<!-- ===== STATUS ===== -->
<i class="a" style="left:233px;top:640px;width:1063px;height:1px;background:#86998a"></i>
<span class="a" style="left:243px;top:649px;font-size:11px;line-height:13px;color:#e4e4e4">单击此处添加备注</span>
<i class="a" style="left:0;top:673px;width:1296px;height:1px;background:#4e4e4e"></i>
<span class="a" style="left:8px;top:678px;font-size:12px;line-height:14px;color:#f2f2f2;letter-spacing:.45px">幻灯片 第 45 张，共 91 张</span>
<span class="a" style="left:202.500px;top:678px;font-size:12px;line-height:14px;color:#f2f2f2">中文(中国)</span>
<span class="a" style="left:915px;top:678px;font-size:12px;line-height:14px;color:#f2f2f2">备注</span>
<span class="a" style="left:976px;top:678px;font-size:12px;line-height:14px;color:#f2f2f2">批注</span>
<svg style="left:0;top:674px" width="1296" height="19" viewBox="0 674 1296 19">
<g fill="none" stroke="#f2f2f2" stroke-width="1.100">
<path d="M172.500 678.500H177L179 680V690.500H172.500ZM179 680L183.500 678.500V690L179 690.500M181 682L185.500 687M185.500 682L181 687"/>
<path d="M899 689.500H910M899 686.500H910M901 683.500H908L904.500 679.500Z" />
</g>
<path d="M901 683.500H908L904.500 679.500Z" fill="#f2f2f2"/>
<path d="M959 679H973V687.500H966L962.500 691V687.500H959Z" fill="#e6d6e4" stroke="#e6d6e4" stroke-linejoin="round"/>
<rect x="1019" y="674" width="38" height="19" fill="#474747"/>
<rect x="1032.500" y="678.500" width="13" height="12" fill="none" stroke="#fff" stroke-width="1.600"/><rect x="1037" y="680.500" width="6.500" height="5" fill="#fff"/><path d="M1033 688H1045" stroke="#fff" stroke-width="1"/>
<g fill="#f2f2f2"><rect x="1069.500" y="678" width="6" height="5.500"/><rect x="1077" y="678" width="6" height="5.500"/><rect x="1069.500" y="685" width="6" height="5.500"/><rect x="1077" y="685" width="6" height="5.500"/></g>
<g fill="none" stroke="#f2f2f2" stroke-width="1"><path d="M1113.500 679V691M1107.500 679.500Q1111 678.500 1113.500 680Q1116 678.500 1119.500 679.500V689.500Q1116 688.500 1113.500 690.500Q1111 688.500 1107.500 689.500Z"/><path d="M1109 682H1112M1109 684.500H1112M1109 687H1112M1115 682H1118M1115 684.500H1118M1115 687H1118" stroke-width=".8"/>
<path d="M1145 679.500H1159M1146.500 680V686.500H1157.500V680M1152 686.500V690.500M1148.500 690.500H1155.500" stroke-width="1.300"/></g>
<path d="M1176 684.500H1181" stroke="#fff" stroke-width="1.600"/>
<path d="M1185 684.500H1287M1236.500 682V687" stroke="#f2f2f2" stroke-width="1"/>
<rect x="1214" y="678" width="4.500" height="13" fill="#f2f2f2"/>
<path d="M1289 684.500H1296M1292.500 681V688" stroke="#fff" stroke-width="1.600"/>
</svg>

<!-- ===== TOOLTIP ===== -->
<div class="a" style="left:1207px;top:190.500px;width:93px;height:91.500px;background:#f6f2f6;border:1px solid #9a9a9a;box-shadow:2px 2px 3px rgba(0,0,0,.35)"></div>
<span class="a" style="left:1215px;top:200px;font-size:12px;line-height:14px;font-weight:bold;color:#1a1a1a">切换</span>
<span class="a" style="left:1217px;top:219px;font-size:12px;line-height:16.300px;color:#1a1a1a;white-space:pre">点击切换为多窗口模式
即隐藏当前窗口
口。.</span>

</body>
</html>
